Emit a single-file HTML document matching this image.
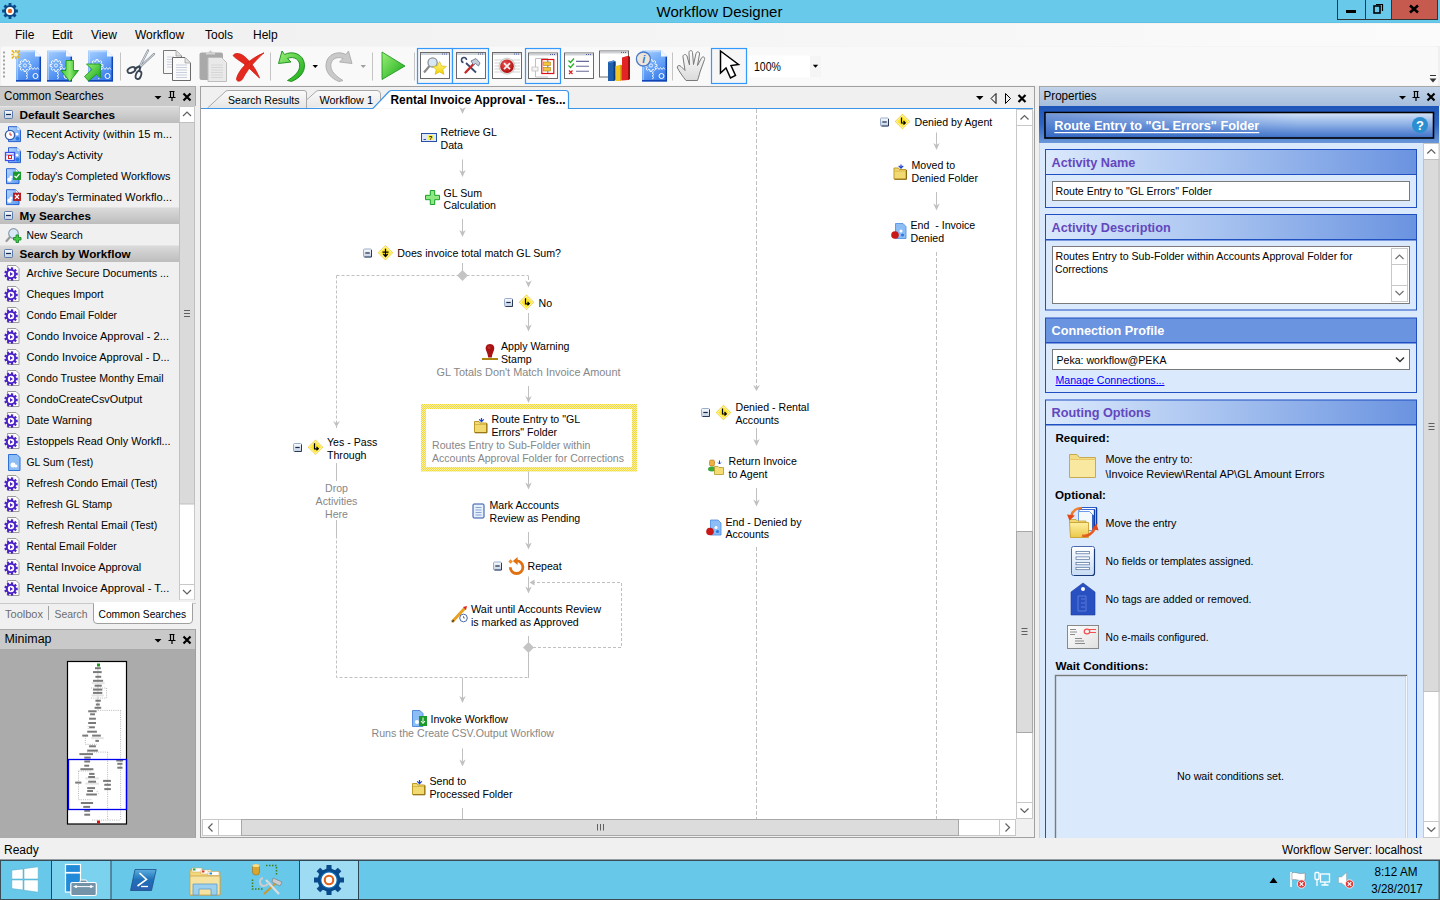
<!DOCTYPE html>
<html><head><meta charset="utf-8"><title>Workflow Designer</title>
<style>html,body{margin:0;padding:0;width:1440px;height:900px;overflow:hidden;background:#F0F0F0}
svg{display:block;font-family:"Liberation Sans", sans-serif}</style></head>
<body><svg width="1440" height="900" viewBox="0 0 1440 900">
<rect x="0" y="0" width="1440" height="900" fill="#F0F0F0"/>
<rect x="0" y="0" width="1440" height="23" fill="#69C9EA"/>
<rect x="0" y="22" width="1440" height="1" fill="#5EC4E7"/>
<rect x="0" y="23" width="1440" height="1" fill="#F6F3F1"/>
<path d="M17.88,9.59 L17.88,12.41 L15.83,12.42 L15.13,14.11 L16.56,15.57 L14.57,17.56 L13.11,16.13 L11.42,16.83 L11.41,18.88 L8.59,18.88 L8.58,16.83 L6.89,16.13 L5.43,17.56 L3.44,15.57 L4.87,14.11 L4.17,12.42 L2.12,12.41 L2.12,9.59 L4.17,9.58 L4.87,7.89 L3.44,6.43 L5.43,4.44 L6.89,5.87 L8.58,5.17 L8.59,3.12 L11.41,3.12 L11.42,5.17 L13.11,5.87 L14.57,4.44 L16.56,6.43 L15.13,7.89 L15.83,9.58Z" fill="#0A4A8A"/>
<circle cx="10" cy="11" r="4" fill="#fff"/><circle cx="10" cy="11" r="2.2" fill="#E2651E"/>
<text x="719.5" y="17" font-size="15" fill="#000" font-weight="normal" text-anchor="middle" textLength="126" lengthAdjust="spacingAndGlyphs">Workflow Designer</text>
<rect x="1337.5" y="-1" width="28" height="20.5" fill="#69C9EA" stroke="#333" stroke-width="1"/>
<rect x="1365.5" y="-1" width="26" height="20.5" fill="#69C9EA" stroke="#333" stroke-width="1"/>
<rect x="1391.5" y="-1" width="46" height="20.5" fill="#C75A4F" stroke="#333" stroke-width="1"/>
<rect x="1346" y="10" width="10" height="3" fill="#000"/>
<rect x="1374" y="6" width="6" height="7" fill="none" stroke="#000" stroke-width="1.6"/>
<path d="M1376,4.5 H1382.5 V11" fill="none" stroke="#000" stroke-width="1.2"/>
<path d="M1410,5.5 L1418,12.5 M1418,5.5 L1410,12.5" stroke="#000" stroke-width="2.6"/>
<defs><linearGradient id="mnug" x1="0" y1="0" x2="1" y2="0"><stop offset="0" stop-color="#EFEFEF"/><stop offset="1" stop-color="#FBFBFB"/></linearGradient></defs><rect x="0" y="24" width="1440" height="22" fill="url(#mnug)"/>
<text x="15" y="39" font-size="12" fill="#000" font-weight="normal" text-anchor="start">File</text>
<text x="52" y="39" font-size="12" fill="#000" font-weight="normal" text-anchor="start">Edit</text>
<text x="91" y="39" font-size="12" fill="#000" font-weight="normal" text-anchor="start">View</text>
<text x="135" y="39" font-size="12" fill="#000" font-weight="normal" text-anchor="start">Workflow</text>
<text x="205" y="39" font-size="12" fill="#000" font-weight="normal" text-anchor="start">Tools</text>
<text x="253" y="39" font-size="12" fill="#000" font-weight="normal" text-anchor="start">Help</text>
<defs><linearGradient id="bdg" x1="0" y1="0" x2="0.5" y2="1"><stop offset="0" stop-color="#A9D0FF"/><stop offset="0.55" stop-color="#6BA6F8"/><stop offset="1" stop-color="#3D7FEA"/></linearGradient><linearGradient id="grn" x1="0" y1="0" x2="1" y2="1"><stop offset="0" stop-color="#9CF07A"/><stop offset="1" stop-color="#14A814"/></linearGradient><linearGradient id="grnv" x1="0" y1="0" x2="1" y2="0"><stop offset="0" stop-color="#3CC83C"/><stop offset="0.5" stop-color="#8EEA70"/><stop offset="1" stop-color="#18A818"/></linearGradient><radialGradient id="redc" cx="0.4" cy="0.35" r="0.7"><stop offset="0" stop-color="#F05050"/><stop offset="1" stop-color="#A80A0A"/></radialGradient><linearGradient id="starg" x1="0" y1="0" x2="0" y2="1"><stop offset="0" stop-color="#FFF890"/><stop offset="1" stop-color="#F0D000"/></linearGradient><linearGradient id="handg" x1="0" y1="0" x2="0" y2="1"><stop offset="0" stop-color="#fff"/><stop offset="1" stop-color="#DADADA"/></linearGradient></defs>
<rect x="0" y="46" width="1440" height="40" fill="#F0F0F0"/>
<rect x="1" y="46.5" width="1437" height="39" rx="2" fill="#F9F9F9"/>
<rect x="3" y="51.5" width="2" height="2" fill="#A5A5A5"/>
<rect x="3" y="55.5" width="2" height="2" fill="#A5A5A5"/>
<rect x="3" y="59.5" width="2" height="2" fill="#A5A5A5"/>
<rect x="3" y="63.5" width="2" height="2" fill="#A5A5A5"/>
<rect x="3" y="67.5" width="2" height="2" fill="#A5A5A5"/>
<rect x="3" y="71.5" width="2" height="2" fill="#A5A5A5"/>
<rect x="3" y="75.5" width="2" height="2" fill="#A5A5A5"/>
<path d="M16,50.5 H35 L41,56.5 V81.5 H16Z" fill="url(#bdg)"/><path d="M17.2,51.7 H34.5 M17.2,51.7 V80.0" stroke="#C9E2FF" stroke-width="1" opacity="0.8"/><path d="M40.3,56.5 V80.8 H16" fill="none" stroke="#1244B4" stroke-width="1.5"/><path d="M35,50.5 V56.5 H41Z" fill="#F2F7FF"/><path d="M30.91,64.45 L30.91,66.55 L29.37,66.57 L28.85,67.84 L29.92,68.93 L28.43,70.42 L27.34,69.35 L26.07,69.87 L26.05,71.41 L23.95,71.41 L23.93,69.87 L22.66,69.35 L21.57,70.42 L20.08,68.93 L21.15,67.84 L20.63,66.57 L19.09,66.55 L19.09,64.45 L20.63,64.43 L21.15,63.16 L20.08,62.07 L21.57,60.58 L22.66,61.65 L23.93,61.13 L23.95,59.59 L26.05,59.59 L26.07,61.13 L27.34,61.65 L28.43,60.58 L29.92,62.07 L28.85,63.16 L29.37,64.43Z" fill="none" stroke="#fff" stroke-width="0.9"/><circle cx="25" cy="65.5" r="1.6" fill="none" stroke="#fff" stroke-width="0.8"/><path d="M30,69.5 l1.5,-2 l1.5,2 l1.5,-2 l1.5,2 l1.5,-2 l1.5,2" fill="none" stroke="#fff" stroke-width="0.8"/><path d="M28,71.5 l-2,1.5 l2,1.5 l-2,1.5 l2,1.5 l-2,1.5" fill="none" stroke="#fff" stroke-width="0.8"/><circle cx="35.5" cy="76.0" r="2.5" fill="none" stroke="#fff" stroke-width="1"/>
<g transform="translate(15.8 54.4)"><path d="M-4,-4 L4,4 M4,-4 L-4,4" stroke="#E6B422" stroke-width="1.5"/><path d="M0,-4.5 V4.5 M-4.5,0 H4.5" stroke="#E6B422" stroke-width="1.5"/><circle r="2.2" fill="#FFF6C8"/></g>
<path d="M47,50.5 H66 L72,56.5 V81.5 H47Z" fill="url(#bdg)"/><path d="M48.2,51.7 H65.5 M48.2,51.7 V80.0" stroke="#C9E2FF" stroke-width="1" opacity="0.8"/><path d="M71.3,56.5 V80.8 H47" fill="none" stroke="#1244B4" stroke-width="1.5"/><path d="M66,50.5 V56.5 H72Z" fill="#F2F7FF"/><path d="M61.91,64.45 L61.91,66.55 L60.37,66.57 L59.85,67.84 L60.92,68.93 L59.43,70.42 L58.34,69.35 L57.07,69.87 L57.05,71.41 L54.95,71.41 L54.93,69.87 L53.66,69.35 L52.57,70.42 L51.08,68.93 L52.15,67.84 L51.63,66.57 L50.09,66.55 L50.09,64.45 L51.63,64.43 L52.15,63.16 L51.08,62.07 L52.57,60.58 L53.66,61.65 L54.93,61.13 L54.95,59.59 L57.05,59.59 L57.07,61.13 L58.34,61.65 L59.43,60.58 L60.92,62.07 L59.85,63.16 L60.37,64.43Z" fill="none" stroke="#fff" stroke-width="0.9"/><circle cx="56" cy="65.5" r="1.6" fill="none" stroke="#fff" stroke-width="0.8"/><path d="M61,69.5 l1.5,-2 l1.5,2 l1.5,-2 l1.5,2 l1.5,-2 l1.5,2" fill="none" stroke="#fff" stroke-width="0.8"/><path d="M59,71.5 l-2,1.5 l2,1.5 l-2,1.5 l2,1.5 l-2,1.5" fill="none" stroke="#fff" stroke-width="0.8"/><circle cx="66.5" cy="76.0" r="2.5" fill="none" stroke="#fff" stroke-width="1"/>
<path d="M66,60.5 H73.5 V70.5 H78.5 L69.8,81.5 L61,70.5 H66Z" fill="url(#grnv)" stroke="#129012" stroke-width="0.8"/>
<path d="M88,50.5 H107 L113,56.5 V81.5 H88Z" fill="url(#bdg)"/><path d="M89.2,51.7 H106.5 M89.2,51.7 V80.0" stroke="#C9E2FF" stroke-width="1" opacity="0.8"/><path d="M112.3,56.5 V80.8 H88" fill="none" stroke="#1244B4" stroke-width="1.5"/><path d="M107,50.5 V56.5 H113Z" fill="#F2F7FF"/><path d="M102.91,64.45 L102.91,66.55 L101.37,66.57 L100.85,67.84 L101.92,68.93 L100.43,70.42 L99.34,69.35 L98.07,69.87 L98.05,71.41 L95.95,71.41 L95.93,69.87 L94.66,69.35 L93.57,70.42 L92.08,68.93 L93.15,67.84 L92.63,66.57 L91.09,66.55 L91.09,64.45 L92.63,64.43 L93.15,63.16 L92.08,62.07 L93.57,60.58 L94.66,61.65 L95.93,61.13 L95.95,59.59 L98.05,59.59 L98.07,61.13 L99.34,61.65 L100.43,60.58 L101.92,62.07 L100.85,63.16 L101.37,64.43Z" fill="none" stroke="#fff" stroke-width="0.9"/><circle cx="97" cy="65.5" r="1.6" fill="none" stroke="#fff" stroke-width="0.8"/><path d="M102,69.5 l1.5,-2 l1.5,2 l1.5,-2 l1.5,2 l1.5,-2 l1.5,2" fill="none" stroke="#fff" stroke-width="0.8"/><path d="M100,71.5 l-2,1.5 l2,1.5 l-2,1.5 l2,1.5 l-2,1.5" fill="none" stroke="#fff" stroke-width="0.8"/><circle cx="107.5" cy="76.0" r="2.5" fill="none" stroke="#fff" stroke-width="1"/>
<path d="M100.3,64 L100.3,78 L96.5,74.3 L88.5,81 L84.5,76.5 L92,69.5 L86.5,64Z" fill="url(#grn)" stroke="#129012" stroke-width="0.8"/>
<rect x="120" y="52.5" width="1" height="28" fill="#C4C4C4"/>
<path d="M140,66 L148,50.5 M140.5,66.5 L154,54" stroke="#8A949E" stroke-width="2.2" stroke-linecap="round"/>
<path d="M140,66 L148,50.5 M140.5,66.5 L154,54" stroke="#E8ECF0" stroke-width="0.8"/>
<path d="M140,66 L134,69 M140.5,66.5 L139,72" stroke="#3A4654" stroke-width="2"/>
<ellipse cx="131.5" cy="70" rx="4.2" ry="2.6" fill="none" stroke="#3A4654" stroke-width="1.8" transform="rotate(-25 131.5 70)"/>
<ellipse cx="138.5" cy="75" rx="2.6" ry="4.2" fill="none" stroke="#3A4654" stroke-width="1.8" transform="rotate(20 138.5 75)"/>
<path d="M163.5,50.5 H176 L181.5,56 V73.5 H163.5Z" fill="#F8F8F8" stroke="#7A7A7A" stroke-width="1"/>
<path d="M176,50.5 V56 H181.5" fill="#E0E0E0" stroke="#9A9A9A" stroke-width="0.7"/>
<path d="M167,57.0 H174" stroke="#C8CEDC" stroke-width="0.9"/>
<path d="M167,59.5 H174" stroke="#C8CEDC" stroke-width="0.9"/>
<path d="M167,62.0 H174" stroke="#C8CEDC" stroke-width="0.9"/>
<path d="M167,64.5 H174" stroke="#C8CEDC" stroke-width="0.9"/>
<path d="M167,67.0 H174" stroke="#C8CEDC" stroke-width="0.9"/>
<path d="M172.5,57.5 H185 L190.5,63 V80.5 H172.5Z" fill="#FAFAFA" stroke="#6A6A6A" stroke-width="1"/>
<path d="M185,57.5 V63 H190.5" fill="#E0E0E0" stroke="#9A9A9A" stroke-width="0.7"/>
<path d="M176,65.0 H187" stroke="#C4CADA" stroke-width="0.9"/>
<path d="M176,67.5 H187" stroke="#C4CADA" stroke-width="0.9"/>
<path d="M176,70.0 H187" stroke="#C4CADA" stroke-width="0.9"/>
<path d="M176,72.5 H187" stroke="#C4CADA" stroke-width="0.9"/>
<path d="M176,75.0 H187" stroke="#C4CADA" stroke-width="0.9"/>
<path d="M176,77.5 H187" stroke="#C4CADA" stroke-width="0.9"/>
<rect x="199.5" y="52.5" width="23.5" height="27.5" rx="2" fill="#A9A9A9"/>
<path d="M206,54 L210.5,50.5 L215,54Z" fill="#C8C8C8" stroke="#E0E0E0" stroke-width="0.8"/>
<path d="M208,57.5 H221.5 L226.5,62.5 V81.5 H208Z" fill="#E9E9E9" stroke="#BDBDBD" stroke-width="1"/>
<path d="M211,65.0 H223" stroke="#D4D4D4" stroke-width="0.9"/>
<path d="M211,67.5 H223" stroke="#D4D4D4" stroke-width="0.9"/>
<path d="M211,70.0 H223" stroke="#D4D4D4" stroke-width="0.9"/>
<path d="M211,72.5 H223" stroke="#D4D4D4" stroke-width="0.9"/>
<path d="M211,75.0 H223" stroke="#D4D4D4" stroke-width="0.9"/>
<path d="M211,77.5 H223" stroke="#D4D4D4" stroke-width="0.9"/>
<path d="M233,55.5 C235.5,52 241,53.5 244.5,56.5 C250.5,61.5 256,69 259.5,78 C255,74 249.5,68 243.5,63.5 C239.5,60.5 235.5,58.5 233,55.5Z" fill="#E42A1E" stroke="#D01A10" stroke-width="0.8"/>
<path d="M264,52.8 C255,56.5 247,62 241.5,69 C238.5,73 236.5,77 236.5,79.5 C237,82 241,81.5 242.5,79 C245.5,73 251,65.5 256.5,60 C259.5,57 262,54.5 264,52.8Z" fill="#E42A1E" stroke="#D01A10" stroke-width="0.8"/>
<rect x="270" y="52.5" width="1" height="28" fill="#C4C4C4"/>
<path d="M282,51 L278.5,63.5 L291,62 L287.5,58.5 C294,55.5 301,60 299.5,67.5 C298.5,73 293,77 287.5,80.5 L291.5,81.5 C299,78.5 305,73 304.5,64.5 C303.5,53.5 292,50.5 284.5,54.5Z" fill="url(#grn)" stroke="#178A17" stroke-width="0.9"/>
<path d="M312.5,65 H318 L315.25,68Z" fill="#000"/>
<path d="M348.5,51 L352,63.5 L339.5,62 L343,58.5 C336.5,55.5 329.5,60 331,67.5 C332,73 337.5,77 343,80.5 L339,81.5 C331.5,78.5 325.5,73 326,64.5 C327,53.5 338.5,50.5 346,54.5Z" fill="#C9C9C9" stroke="#ABABAB" stroke-width="0.9"/>
<path d="M360.5,65 H366 L363.25,68Z" fill="#A0A0A0"/>
<rect x="372" y="52.5" width="1" height="28" fill="#C4C4C4"/>
<path d="M382,52 L405,66 L382,79.5Z" fill="url(#grn)" stroke="#1A8F1A" stroke-width="0.8"/>
<rect x="414" y="52.5" width="1" height="28" fill="#C4C4C4"/>
<rect x="417.5" y="48.5" width="35" height="35" fill="#F6F6F6" stroke="#3399FF" stroke-width="1.2"/>
<rect x="420.5" y="52.5" width="29" height="26" fill="#fff" stroke="#6A6A6A" stroke-width="1"/><rect x="421" y="53" width="28" height="2" fill="#D0D4D8"/><path d="M442,54 h1 m1,0 h1 m1,0 h1" stroke="#4A5A9A" stroke-width="1.2"/>
<path d="M429.5,66 L424,72.5" stroke="#8A8A8A" stroke-width="2.2"/><circle cx="432.6" cy="62.4" r="4.6" fill="#D6E8F8" stroke="#909090" stroke-width="1.3"/>
<path d="M439.5,61.5 L441.6,66 L446.4,66.4 L442.8,69.6 L443.9,74.4 L439.5,71.9 L435.1,74.4 L436.2,69.6 L432.6,66.4 L437.4,66Z" fill="url(#starg)" stroke="#D0B000" stroke-width="0.6"/>
<rect x="452.5" y="48.5" width="36" height="35" fill="#F6F6F6" stroke="#3399FF" stroke-width="1.2"/>
<rect x="456.5" y="52.5" width="29" height="26" fill="#fff" stroke="#6A6A6A" stroke-width="1"/><rect x="457" y="53" width="28" height="2" fill="#D0D4D8"/><path d="M478,54 h1 m1,0 h1 m1,0 h1" stroke="#4A5A9A" stroke-width="1.2"/>
<path d="M466,63 L476,72.5" stroke="#3A4A70" stroke-width="1.8"/><path d="M463.5,62.5 a2.5,2.5 0 1,1 3,-2.5" fill="none" stroke="#3A4A70" stroke-width="1.5"/>
<path d="M465.5,72.5 L474,63.5" stroke="#C82828" stroke-width="2.4" stroke-linecap="round"/><path d="M471,61 L476,58.5 L480,63 L478.5,66 L475.5,63.5 L473.5,65Z" fill="#C8CCD8" stroke="#4A5A80" stroke-width="0.7"/>
<rect x="492.5" y="52.5" width="29" height="26" fill="#fff" stroke="#6A6A6A" stroke-width="1"/><rect x="493" y="53" width="28" height="2" fill="#D0D4D8"/><path d="M514,54 h1 m1,0 h1 m1,0 h1" stroke="#4A5A9A" stroke-width="1.2"/>
<path d="M494.5,60 H520 M494.5,63 H520 M494.5,66 H520 M494.5,69 H520 M494.5,72 H520" stroke="#C8C8C8" stroke-width="0.8"/>
<circle cx="507" cy="66.2" r="8" fill="#E8E8E8" stroke="#B0B0B0" stroke-width="0.6"/><circle cx="507" cy="66.2" r="6.8" fill="url(#redc)"/><path d="M504,63.2 L510,69.2 M510,63.2 L504,69.2" stroke="#F2F2F2" stroke-width="1.8"/>
<rect x="525.5" y="48.5" width="35" height="35" fill="#F6F6F6" stroke="#3399FF" stroke-width="1.2"/>
<rect x="528.5" y="53.0" width="29" height="25.5" fill="#fff" stroke="#6A6A6A" stroke-width="1"/><rect x="529" y="53.5" width="28" height="2" fill="#D0D4D8"/><path d="M550,54.5 h1 m1,0 h1 m1,0 h1" stroke="#4A5A9A" stroke-width="1.2"/>
<path d="M535.5,58.5 H548 M535.5,58.5 V77 H548 M531.5,69 H535.5" fill="none" stroke="#C0C0C0" stroke-width="1"/><rect x="532" y="67" width="6" height="4" fill="#F4F4F4" stroke="#C0C0C0" stroke-width="0.8"/>
<rect x="541.8" y="59.5" width="12" height="14" fill="#fff" stroke="#E01010" stroke-width="1.2"/><path d="M547.8,59.5 V73.5" stroke="#2A50C8" stroke-width="0.8"/>
<rect x="543.5" y="62" width="7" height="3.5" fill="#F4C440" stroke="#B08010" stroke-width="0.6"/><rect x="543.5" y="67.5" width="7" height="3.5" fill="#F4C440" stroke="#B08010" stroke-width="0.6"/>
<rect x="564.5" y="53.0" width="29" height="25.5" fill="#fff" stroke="#6A6A6A" stroke-width="1"/><rect x="565" y="53.5" width="28" height="2" fill="#D0D4D8"/><path d="M586,54.5 h1 m1,0 h1 m1,0 h1" stroke="#4A5A9A" stroke-width="1.2"/>
<path d="M568.5,60.5 L570.5,62.5 L574,58.5 M568.5,65.5 L570.5,67.5 L574,63.5" fill="none" stroke="#22B022" stroke-width="1.2"/><path d="M569,70.5 L572.5,74 M572.5,70.5 L569,74" stroke="#E02020" stroke-width="1.2"/>
<path d="M576,61.4 H589 M576,66.3 H589 M576,71.3 H589" stroke="#6A6A9A" stroke-width="1.1"/>
<rect x="599.5" y="51.0" width="29" height="26" fill="#fff" stroke="#6A6A6A" stroke-width="1"/><rect x="600" y="51.5" width="28" height="2" fill="#D0D4D8"/><path d="M621,52.5 h1 m1,0 h1 m1,0 h1" stroke="#4A5A9A" stroke-width="1.2"/>
<path d="M608,62 L613.5,60.5 L615.5,61.5 V80 L613.5,81 L608,81Z" fill="#1F5FAE"/><path d="M613.5,60.5 L615.5,61.5 V80 L613.5,81Z" fill="#0E3C78"/><path d="M608,62 L613.5,60.5 L615.5,61.5 L610,63Z" fill="#4A8AD8"/>
<path d="M615.5,66 L620.5,64.8 L622,65.6 V80 L620.5,81 L615.5,81Z" fill="#F2C424"/><path d="M620.5,64.8 L622,65.6 V80 L620.5,81Z" fill="#B88A00"/>
<path d="M622,57.5 L628,55.8 L630,57 V79 L628,80 L622,80.5Z" fill="#E22424"/><path d="M628,55.8 L630,57 V79 L628,80Z" fill="#9A0E0E"/>
<path d="M642,50.5 H661 L667,56.5 V81.5 H642Z" fill="url(#bdg)"/><path d="M643.2,51.7 H660.5 M643.2,51.7 V80.0" stroke="#C9E2FF" stroke-width="1" opacity="0.8"/><path d="M666.3,56.5 V80.8 H642" fill="none" stroke="#1244B4" stroke-width="1.5"/><path d="M661,50.5 V56.5 H667Z" fill="#F2F7FF"/><path d="M656.91,64.45 L656.91,66.55 L655.37,66.57 L654.85,67.84 L655.92,68.93 L654.43,70.42 L653.34,69.35 L652.07,69.87 L652.05,71.41 L649.95,71.41 L649.93,69.87 L648.66,69.35 L647.57,70.42 L646.08,68.93 L647.15,67.84 L646.63,66.57 L645.09,66.55 L645.09,64.45 L646.63,64.43 L647.15,63.16 L646.08,62.07 L647.57,60.58 L648.66,61.65 L649.93,61.13 L649.95,59.59 L652.05,59.59 L652.07,61.13 L653.34,61.65 L654.43,60.58 L655.92,62.07 L654.85,63.16 L655.37,64.43Z" fill="none" stroke="#fff" stroke-width="0.9"/><circle cx="651" cy="65.5" r="1.6" fill="none" stroke="#fff" stroke-width="0.8"/><path d="M656,69.5 l1.5,-2 l1.5,2 l1.5,-2 l1.5,2 l1.5,-2 l1.5,2" fill="none" stroke="#fff" stroke-width="0.8"/><path d="M654,71.5 l-2,1.5 l2,1.5 l-2,1.5 l2,1.5 l-2,1.5" fill="none" stroke="#fff" stroke-width="0.8"/><circle cx="661.5" cy="76.0" r="2.5" fill="none" stroke="#fff" stroke-width="1"/>
<circle cx="643.4" cy="59" r="7" fill="#EDE6D8" stroke="#4A7AC8" stroke-width="1.3"/><text x="643.8" y="63" font-size="11" font-style="italic" font-weight="bold" fill="#3A7AD8" text-anchor="middle">i</text>
<rect x="672" y="52.5" width="1" height="28" fill="#C4C4C4"/>
<path d="M686,80.5 C683,77 679,71 677.5,68 C676.5,66 679,64.5 681,66.5 L685,70.5 L683,57 C682.5,54.5 686,53.5 687,56 L689.5,65 L689,52.5 C689,50 692.5,50 692.5,52.5 L693.5,64.5 L696,53.5 C696.5,51 700,51.5 699.5,54 L697.5,65.5 L701.5,58 C702.5,56 705.5,57 704.5,59.5 L700,72 C699,76 698,79 697.5,80.5Z" fill="url(#handg)" stroke="#7A7A7A" stroke-width="1"/>
<rect x="711.5" y="48.5" width="35" height="35" fill="#F6F6F6" stroke="#3399FF" stroke-width="1.2"/>
<path d="M720.5,51 L738.5,64.5 L731,65.5 L735.5,75.5 L730.5,78 L726,68 L720.5,73Z" fill="#fff" stroke="#000" stroke-width="1.5" stroke-linejoin="miter"/>
<rect x="748.5" y="55.5" width="73" height="22" fill="#FFFFFF"/>
<rect x="810" y="55.5" width="11.5" height="22" fill="#F5F5F5"/>
<text x="754" y="70.5" font-size="12" fill="#000" font-weight="normal" text-anchor="start" textLength="27" lengthAdjust="spacingAndGlyphs">100%</text>
<path d="M812.8,64.8 H818.2 L815.5,67.8Z" fill="#000"/>
<path d="M1430,75.5 H1436" stroke="#333" stroke-width="1"/><path d="M1429.5,78.5 H1436.5 L1433,82.5Z" fill="#333"/>
<defs><linearGradient id="ghg" x1="0" y1="0" x2="0" y2="1"><stop offset="0" stop-color="#DCDCDC"/><stop offset="1" stop-color="#BDBDBD"/></linearGradient><linearGradient id="sdg" x1="0" y1="0" x2="1" y2="1"><stop offset="0" stop-color="#B8D8FF"/><stop offset="1" stop-color="#5A9AF0"/></linearGradient><linearGradient id="mbg" x1="0" y1="0" x2="0" y2="1"><stop offset="0" stop-color="#FAFCFF"/><stop offset="1" stop-color="#C4D0E2"/></linearGradient></defs>
<rect x="0" y="86" width="196" height="20" fill="#C9C9C9"/>
<rect x="0" y="86" width="196" height="1" fill="#A9A9A9"/>
<rect x="195" y="86" width="1" height="20" fill="#A9A9A9"/>
<text x="4" y="100" font-size="12" fill="#000" font-weight="normal" text-anchor="start" textLength="99.5" lengthAdjust="spacingAndGlyphs">Common Searches</text>
<path d="M154.5,96 H161.5 L158,99.5Z" fill="#000"/><path d="M169.5,91.5 H174.5 M170.5,91.5 V97.5 M173.5,91.5 V97.5 M168.5,97.5 H175.5 M172,97.5 V101" stroke="#000" stroke-width="1.2" fill="none"/><path d="M183.5,93.5 L190.5,100.5 M190.5,93.5 L183.5,100.5" stroke="#000" stroke-width="2.2"/>
<rect x="0" y="106" width="195" height="494" fill="#F0F0F0"/>
<rect x="0" y="106" width="179" height="17" fill="url(#ghg)"/>
<rect x="0" y="106" width="179" height="1" fill="#E4E4E4"/>
<rect x="4.5" y="110.5" width="8" height="8" rx="0.8" fill="url(#mbg)" stroke="#5A7AAA" stroke-width="1"/><path d="M6,114.5 H11" stroke="#1A2A50" stroke-width="1.2"/>
<text x="19.4" y="119" font-size="11.8" fill="#000" font-weight="bold" text-anchor="start" textLength="95.6" lengthAdjust="spacingAndGlyphs">Default Searches</text>
<path d="M8.5,126.7 H17.0 L20.5,130.2 V141.6 H8.5Z" fill="url(#sdg)" stroke="#2A62D0" stroke-width="1"/><path d="M17.0,126.7 V130.2 H20.5" fill="#fff" stroke="#6A9AE0" stroke-width="0.6"/><circle cx="17.5" cy="138.6" r="2" fill="#2D7BE0"/><circle cx="17.0" cy="134.2" r="1.4" fill="#fff"/><circle cx="10" cy="135" r="4.6" fill="#fff" stroke="#2F5AB0" stroke-width="1.3"/><path d="M10,132.5 V135 H12" stroke="#E02020" stroke-width="1" fill="none"/>
<text x="26.5" y="138" font-size="11" fill="#000" font-weight="normal" text-anchor="start" textLength="145.5" lengthAdjust="spacingAndGlyphs">Recent Activity (within 15 m...</text>
<path d="M8.5,147.7 H17.0 L20.5,151.2 V162.6 H8.5Z" fill="url(#sdg)" stroke="#2A62D0" stroke-width="1"/><path d="M17.0,147.7 V151.2 H20.5" fill="#fff" stroke="#6A9AE0" stroke-width="0.6"/><circle cx="17.5" cy="159.6" r="2" fill="#2D7BE0"/><circle cx="17.0" cy="155.2" r="1.4" fill="#fff"/><rect x="5.5" y="152.5" width="9" height="8" fill="#fff" stroke="#3A50E8" stroke-width="1.3"/><path d="M6,155 H14" stroke="#3A50E8" stroke-width="0.8"/><rect x="8.5" y="155.5" width="3" height="3" fill="none" stroke="#E02020" stroke-width="1"/>
<text x="26.5" y="159" font-size="11" fill="#000" font-weight="normal" text-anchor="start" textLength="76.1" lengthAdjust="spacingAndGlyphs">Today&#39;s Activity</text>
<path d="M6.5,168.7 H15.5 L19,172.2 V183.6 H6.5Z" fill="url(#sdg)" stroke="#2A62D0" stroke-width="1"/><path d="M15.5,168.7 V172.2 H19" fill="#fff" stroke="#6A9AE0" stroke-width="0.6"/><circle cx="9.5" cy="179.6" r="2.2" fill="#fff"/><circle cx="11" cy="177.1" r="1.5" fill="#fff"/><rect x="13" y="171.7" width="8" height="8.2" fill="#1A9A2A"/><path d="M14.5,175.8 L16.3,177.6 L19.5,173.8" stroke="#fff" stroke-width="1.2" fill="none"/>
<text x="26.5" y="180" font-size="11" fill="#000" font-weight="normal" text-anchor="start" textLength="144.0" lengthAdjust="spacingAndGlyphs">Today&#39;s Completed Workflows</text>
<path d="M6.5,189.7 H15.5 L19,193.2 V204.6 H6.5Z" fill="url(#sdg)" stroke="#2A62D0" stroke-width="1"/><path d="M15.5,189.7 V193.2 H19" fill="#fff" stroke="#6A9AE0" stroke-width="0.6"/><circle cx="9.5" cy="200.6" r="2.2" fill="#fff"/><circle cx="11" cy="198.1" r="1.5" fill="#fff"/><rect x="13" y="192.7" width="8" height="8.2" fill="#B81C1C"/><path d="M15,194.7 L19,198.9 M19,194.7 L15,198.9" stroke="#fff" stroke-width="1.3"/>
<text x="26.5" y="201" font-size="11" fill="#000" font-weight="normal" text-anchor="start" textLength="145.5" lengthAdjust="spacingAndGlyphs">Today&#39;s Terminated Workflo...</text>
<rect x="0" y="207" width="179" height="17" fill="url(#ghg)"/>
<rect x="0" y="207" width="179" height="1" fill="#E4E4E4"/>
<rect x="4.5" y="211.5" width="8" height="8" rx="0.8" fill="url(#mbg)" stroke="#5A7AAA" stroke-width="1"/><path d="M6,215.5 H11" stroke="#1A2A50" stroke-width="1.2"/>
<text x="19.4" y="220" font-size="11.8" fill="#000" font-weight="bold" text-anchor="start" textLength="71.6" lengthAdjust="spacingAndGlyphs">My Searches</text>
<path d="M10,237 L6.5,241" stroke="#9A9A9A" stroke-width="2.2" stroke-linecap="round"/><circle cx="13.5" cy="233.5" r="4.8" fill="#D8EAF8" stroke="#8A9AAA" stroke-width="1.2"/><path d="M16,235 h2.5 v2.5 h2.5 v2.5 h-2.5 v2.5 h-2.5 v-2.5 h-2.5 v-2.5 h2.5Z" fill="#4ACC4A" stroke="#1A8A2A" stroke-width="0.9"/>
<text x="26.5" y="239" font-size="11" fill="#000" font-weight="normal" text-anchor="start" textLength="56.3" lengthAdjust="spacingAndGlyphs">New Search</text>
<rect x="0" y="245" width="179" height="17" fill="url(#ghg)"/>
<rect x="0" y="245" width="179" height="1" fill="#E4E4E4"/>
<rect x="4.5" y="249.5" width="8" height="8" rx="0.8" fill="url(#mbg)" stroke="#5A7AAA" stroke-width="1"/><path d="M6,253.5 H11" stroke="#1A2A50" stroke-width="1.2"/>
<text x="19.4" y="258" font-size="11.8" fill="#000" font-weight="bold" text-anchor="start" textLength="111.2" lengthAdjust="spacingAndGlyphs">Search by Workflow</text>
<path d="M7.5,265.5 H16 L19,268.5 V280.5 H7.5Z" fill="#fff" stroke="#9A9A9A" stroke-width="1"/><path d="M17.70,272.82 L17.70,275.18 L15.87,275.14 L15.46,276.25 L16.89,277.40 L15.37,279.21 L14.00,278.00 L12.97,278.60 L13.33,280.39 L11.00,280.80 L10.72,278.99 L9.55,278.79 L8.67,280.39 L6.63,279.21 L7.58,277.64 L6.82,276.74 L5.11,277.40 L4.30,275.18 L6.04,274.59 L6.04,273.41 L4.30,272.82 L5.11,270.60 L6.82,271.26 L7.58,270.36 L6.63,268.79 L8.67,267.61 L9.55,269.21 L10.72,269.01 L11.00,267.20 L13.33,267.61 L12.97,269.40 L14.00,270.00 L15.37,268.79 L16.89,270.60 L15.46,271.75 L15.87,272.86Z" fill="#4B22C8"/><circle cx="11" cy="274" r="5" fill="#4B22C8"/><circle cx="11" cy="274" r="3.2" fill="#fff"/><path d="M10,272 L13,274 L10,276Z" fill="#4B22C8"/>
<text x="26.5" y="277" font-size="11" fill="#000" font-weight="normal" text-anchor="start" textLength="142.5" lengthAdjust="spacingAndGlyphs">Archive Secure Documents ...</text>
<path d="M7.5,286.5 H16 L19,289.5 V301.5 H7.5Z" fill="#fff" stroke="#9A9A9A" stroke-width="1"/><path d="M17.70,293.82 L17.70,296.18 L15.87,296.14 L15.46,297.25 L16.89,298.40 L15.37,300.21 L14.00,299.00 L12.97,299.60 L13.33,301.39 L11.00,301.80 L10.72,299.99 L9.55,299.79 L8.67,301.39 L6.63,300.21 L7.58,298.64 L6.82,297.74 L5.11,298.40 L4.30,296.18 L6.04,295.59 L6.04,294.41 L4.30,293.82 L5.11,291.60 L6.82,292.26 L7.58,291.36 L6.63,289.79 L8.67,288.61 L9.55,290.21 L10.72,290.01 L11.00,288.20 L13.33,288.61 L12.97,290.40 L14.00,291.00 L15.37,289.79 L16.89,291.60 L15.46,292.75 L15.87,293.86Z" fill="#4B22C8"/><circle cx="11" cy="295" r="5" fill="#4B22C8"/><circle cx="11" cy="295" r="3.2" fill="#fff"/><path d="M10,293 L13,295 L10,297Z" fill="#4B22C8"/>
<text x="26.5" y="298" font-size="11" fill="#000" font-weight="normal" text-anchor="start" textLength="77.1" lengthAdjust="spacingAndGlyphs">Cheques Import</text>
<path d="M7.5,307.5 H16 L19,310.5 V322.5 H7.5Z" fill="#fff" stroke="#9A9A9A" stroke-width="1"/><path d="M17.70,314.82 L17.70,317.18 L15.87,317.14 L15.46,318.25 L16.89,319.40 L15.37,321.21 L14.00,320.00 L12.97,320.60 L13.33,322.39 L11.00,322.80 L10.72,320.99 L9.55,320.79 L8.67,322.39 L6.63,321.21 L7.58,319.64 L6.82,318.74 L5.11,319.40 L4.30,317.18 L6.04,316.59 L6.04,315.41 L4.30,314.82 L5.11,312.60 L6.82,313.26 L7.58,312.36 L6.63,310.79 L8.67,309.61 L9.55,311.21 L10.72,311.01 L11.00,309.20 L13.33,309.61 L12.97,311.40 L14.00,312.00 L15.37,310.79 L16.89,312.60 L15.46,313.75 L15.87,314.86Z" fill="#4B22C8"/><circle cx="11" cy="316" r="5" fill="#4B22C8"/><circle cx="11" cy="316" r="3.2" fill="#fff"/><path d="M10,314 L13,316 L10,318Z" fill="#4B22C8"/>
<text x="26.5" y="319" font-size="11" fill="#000" font-weight="normal" text-anchor="start" textLength="90.5" lengthAdjust="spacingAndGlyphs">Condo Email Folder</text>
<path d="M7.5,328.5 H16 L19,331.5 V343.5 H7.5Z" fill="#fff" stroke="#9A9A9A" stroke-width="1"/><path d="M17.70,335.82 L17.70,338.18 L15.87,338.14 L15.46,339.25 L16.89,340.40 L15.37,342.21 L14.00,341.00 L12.97,341.60 L13.33,343.39 L11.00,343.80 L10.72,341.99 L9.55,341.79 L8.67,343.39 L6.63,342.21 L7.58,340.64 L6.82,339.74 L5.11,340.40 L4.30,338.18 L6.04,337.59 L6.04,336.41 L4.30,335.82 L5.11,333.60 L6.82,334.26 L7.58,333.36 L6.63,331.79 L8.67,330.61 L9.55,332.21 L10.72,332.01 L11.00,330.20 L13.33,330.61 L12.97,332.40 L14.00,333.00 L15.37,331.79 L16.89,333.60 L15.46,334.75 L15.87,335.86Z" fill="#4B22C8"/><circle cx="11" cy="337" r="5" fill="#4B22C8"/><circle cx="11" cy="337" r="3.2" fill="#fff"/><path d="M10,335 L13,337 L10,339Z" fill="#4B22C8"/>
<text x="26.5" y="340" font-size="11" fill="#000" font-weight="normal" text-anchor="start" textLength="142.5" lengthAdjust="spacingAndGlyphs">Condo Invoice Approval - 2...</text>
<path d="M7.5,349.5 H16 L19,352.5 V364.5 H7.5Z" fill="#fff" stroke="#9A9A9A" stroke-width="1"/><path d="M17.70,356.82 L17.70,359.18 L15.87,359.14 L15.46,360.25 L16.89,361.40 L15.37,363.21 L14.00,362.00 L12.97,362.60 L13.33,364.39 L11.00,364.80 L10.72,362.99 L9.55,362.79 L8.67,364.39 L6.63,363.21 L7.58,361.64 L6.82,360.74 L5.11,361.40 L4.30,359.18 L6.04,358.59 L6.04,357.41 L4.30,356.82 L5.11,354.60 L6.82,355.26 L7.58,354.36 L6.63,352.79 L8.67,351.61 L9.55,353.21 L10.72,353.01 L11.00,351.20 L13.33,351.61 L12.97,353.40 L14.00,354.00 L15.37,352.79 L16.89,354.60 L15.46,355.75 L15.87,356.86Z" fill="#4B22C8"/><circle cx="11" cy="358" r="5" fill="#4B22C8"/><circle cx="11" cy="358" r="3.2" fill="#fff"/><path d="M10,356 L13,358 L10,360Z" fill="#4B22C8"/>
<text x="26.5" y="361" font-size="11" fill="#000" font-weight="normal" text-anchor="start" textLength="143.1" lengthAdjust="spacingAndGlyphs">Condo Invoice Approval - D...</text>
<path d="M7.5,370.5 H16 L19,373.5 V385.5 H7.5Z" fill="#fff" stroke="#9A9A9A" stroke-width="1"/><path d="M17.70,377.82 L17.70,380.18 L15.87,380.14 L15.46,381.25 L16.89,382.40 L15.37,384.21 L14.00,383.00 L12.97,383.60 L13.33,385.39 L11.00,385.80 L10.72,383.99 L9.55,383.79 L8.67,385.39 L6.63,384.21 L7.58,382.64 L6.82,381.74 L5.11,382.40 L4.30,380.18 L6.04,379.59 L6.04,378.41 L4.30,377.82 L5.11,375.60 L6.82,376.26 L7.58,375.36 L6.63,373.79 L8.67,372.61 L9.55,374.21 L10.72,374.01 L11.00,372.20 L13.33,372.61 L12.97,374.40 L14.00,375.00 L15.37,373.79 L16.89,375.60 L15.46,376.75 L15.87,377.86Z" fill="#4B22C8"/><circle cx="11" cy="379" r="5" fill="#4B22C8"/><circle cx="11" cy="379" r="3.2" fill="#fff"/><path d="M10,377 L13,379 L10,381Z" fill="#4B22C8"/>
<text x="26.5" y="382" font-size="11" fill="#000" font-weight="normal" text-anchor="start" textLength="137.1" lengthAdjust="spacingAndGlyphs">Condo Trustee Monthy Email</text>
<path d="M7.5,391.5 H16 L19,394.5 V406.5 H7.5Z" fill="#fff" stroke="#9A9A9A" stroke-width="1"/><path d="M17.70,398.82 L17.70,401.18 L15.87,401.14 L15.46,402.25 L16.89,403.40 L15.37,405.21 L14.00,404.00 L12.97,404.60 L13.33,406.39 L11.00,406.80 L10.72,404.99 L9.55,404.79 L8.67,406.39 L6.63,405.21 L7.58,403.64 L6.82,402.74 L5.11,403.40 L4.30,401.18 L6.04,400.59 L6.04,399.41 L4.30,398.82 L5.11,396.60 L6.82,397.26 L7.58,396.36 L6.63,394.79 L8.67,393.61 L9.55,395.21 L10.72,395.01 L11.00,393.20 L13.33,393.61 L12.97,395.40 L14.00,396.00 L15.37,394.79 L16.89,396.60 L15.46,397.75 L15.87,398.86Z" fill="#4B22C8"/><circle cx="11" cy="400" r="5" fill="#4B22C8"/><circle cx="11" cy="400" r="3.2" fill="#fff"/><path d="M10,398 L13,400 L10,402Z" fill="#4B22C8"/>
<text x="26.5" y="403" font-size="11" fill="#000" font-weight="normal" text-anchor="start" textLength="115.9" lengthAdjust="spacingAndGlyphs">CondoCreateCsvOutput</text>
<path d="M7.5,412.5 H16 L19,415.5 V427.5 H7.5Z" fill="#fff" stroke="#9A9A9A" stroke-width="1"/><path d="M17.70,419.82 L17.70,422.18 L15.87,422.14 L15.46,423.25 L16.89,424.40 L15.37,426.21 L14.00,425.00 L12.97,425.60 L13.33,427.39 L11.00,427.80 L10.72,425.99 L9.55,425.79 L8.67,427.39 L6.63,426.21 L7.58,424.64 L6.82,423.74 L5.11,424.40 L4.30,422.18 L6.04,421.59 L6.04,420.41 L4.30,419.82 L5.11,417.60 L6.82,418.26 L7.58,417.36 L6.63,415.79 L8.67,414.61 L9.55,416.21 L10.72,416.01 L11.00,414.20 L13.33,414.61 L12.97,416.40 L14.00,417.00 L15.37,415.79 L16.89,417.60 L15.46,418.75 L15.87,419.86Z" fill="#4B22C8"/><circle cx="11" cy="421" r="5" fill="#4B22C8"/><circle cx="11" cy="421" r="3.2" fill="#fff"/><path d="M10,419 L13,421 L10,423Z" fill="#4B22C8"/>
<text x="26.5" y="424" font-size="11" fill="#000" font-weight="normal" text-anchor="start" textLength="65.5" lengthAdjust="spacingAndGlyphs">Date Warning</text>
<path d="M7.5,433.5 H16 L19,436.5 V448.5 H7.5Z" fill="#fff" stroke="#9A9A9A" stroke-width="1"/><path d="M17.70,440.82 L17.70,443.18 L15.87,443.14 L15.46,444.25 L16.89,445.40 L15.37,447.21 L14.00,446.00 L12.97,446.60 L13.33,448.39 L11.00,448.80 L10.72,446.99 L9.55,446.79 L8.67,448.39 L6.63,447.21 L7.58,445.64 L6.82,444.74 L5.11,445.40 L4.30,443.18 L6.04,442.59 L6.04,441.41 L4.30,440.82 L5.11,438.60 L6.82,439.26 L7.58,438.36 L6.63,436.79 L8.67,435.61 L9.55,437.21 L10.72,437.01 L11.00,435.20 L13.33,435.61 L12.97,437.40 L14.00,438.00 L15.37,436.79 L16.89,438.60 L15.46,439.75 L15.87,440.86Z" fill="#4B22C8"/><circle cx="11" cy="442" r="5" fill="#4B22C8"/><circle cx="11" cy="442" r="3.2" fill="#fff"/><path d="M10,440 L13,442 L10,444Z" fill="#4B22C8"/>
<text x="26.5" y="445" font-size="11" fill="#000" font-weight="normal" text-anchor="start" textLength="144.1" lengthAdjust="spacingAndGlyphs">Estoppels Read Only Workfl...</text>
<path d="M8.5,454.5 H17 L20,457.5 V470.5 H8.5Z" fill="#8CBDF5" stroke="#2F6FD8" stroke-width="1"/><circle cx="13" cy="465" r="2.5" fill="#fff"/><circle cx="16" cy="466" r="1.5" fill="#fff"/>
<text x="26.5" y="466" font-size="11" fill="#000" font-weight="normal" text-anchor="start" textLength="66.6" lengthAdjust="spacingAndGlyphs">GL Sum (Test)</text>
<path d="M7.5,475.5 H16 L19,478.5 V490.5 H7.5Z" fill="#fff" stroke="#9A9A9A" stroke-width="1"/><path d="M17.70,482.82 L17.70,485.18 L15.87,485.14 L15.46,486.25 L16.89,487.40 L15.37,489.21 L14.00,488.00 L12.97,488.60 L13.33,490.39 L11.00,490.80 L10.72,488.99 L9.55,488.79 L8.67,490.39 L6.63,489.21 L7.58,487.64 L6.82,486.74 L5.11,487.40 L4.30,485.18 L6.04,484.59 L6.04,483.41 L4.30,482.82 L5.11,480.60 L6.82,481.26 L7.58,480.36 L6.63,478.79 L8.67,477.61 L9.55,479.21 L10.72,479.01 L11.00,477.20 L13.33,477.61 L12.97,479.40 L14.00,480.00 L15.37,478.79 L16.89,480.60 L15.46,481.75 L15.87,482.86Z" fill="#4B22C8"/><circle cx="11" cy="484" r="5" fill="#4B22C8"/><circle cx="11" cy="484" r="3.2" fill="#fff"/><path d="M10,482 L13,484 L10,486Z" fill="#4B22C8"/>
<text x="26.5" y="487" font-size="11" fill="#000" font-weight="normal" text-anchor="start" textLength="130.9" lengthAdjust="spacingAndGlyphs">Refresh Condo Email (Test)</text>
<path d="M7.5,496.5 H16 L19,499.5 V511.5 H7.5Z" fill="#fff" stroke="#9A9A9A" stroke-width="1"/><path d="M17.70,503.82 L17.70,506.18 L15.87,506.14 L15.46,507.25 L16.89,508.40 L15.37,510.21 L14.00,509.00 L12.97,509.60 L13.33,511.39 L11.00,511.80 L10.72,509.99 L9.55,509.79 L8.67,511.39 L6.63,510.21 L7.58,508.64 L6.82,507.74 L5.11,508.40 L4.30,506.18 L6.04,505.59 L6.04,504.41 L4.30,503.82 L5.11,501.60 L6.82,502.26 L7.58,501.36 L6.63,499.79 L8.67,498.61 L9.55,500.21 L10.72,500.01 L11.00,498.20 L13.33,498.61 L12.97,500.40 L14.00,501.00 L15.37,499.79 L16.89,501.60 L15.46,502.75 L15.87,503.86Z" fill="#4B22C8"/><circle cx="11" cy="505" r="5" fill="#4B22C8"/><circle cx="11" cy="505" r="3.2" fill="#fff"/><path d="M10,503 L13,505 L10,507Z" fill="#4B22C8"/>
<text x="26.5" y="508" font-size="11" fill="#000" font-weight="normal" text-anchor="start" textLength="85.5" lengthAdjust="spacingAndGlyphs">Refresh GL Stamp</text>
<path d="M7.5,517.5 H16 L19,520.5 V532.5 H7.5Z" fill="#fff" stroke="#9A9A9A" stroke-width="1"/><path d="M17.70,524.82 L17.70,527.18 L15.87,527.14 L15.46,528.25 L16.89,529.40 L15.37,531.21 L14.00,530.00 L12.97,530.60 L13.33,532.39 L11.00,532.80 L10.72,530.99 L9.55,530.79 L8.67,532.39 L6.63,531.21 L7.58,529.64 L6.82,528.74 L5.11,529.40 L4.30,527.18 L6.04,526.59 L6.04,525.41 L4.30,524.82 L5.11,522.60 L6.82,523.26 L7.58,522.36 L6.63,520.79 L8.67,519.61 L9.55,521.21 L10.72,521.01 L11.00,519.20 L13.33,519.61 L12.97,521.40 L14.00,522.00 L15.37,520.79 L16.89,522.60 L15.46,523.75 L15.87,524.86Z" fill="#4B22C8"/><circle cx="11" cy="526" r="5" fill="#4B22C8"/><circle cx="11" cy="526" r="3.2" fill="#fff"/><path d="M10,524 L13,526 L10,528Z" fill="#4B22C8"/>
<text x="26.5" y="529" font-size="11" fill="#000" font-weight="normal" text-anchor="start" textLength="130.9" lengthAdjust="spacingAndGlyphs">Refresh Rental Email (Test)</text>
<path d="M7.5,538.5 H16 L19,541.5 V553.5 H7.5Z" fill="#fff" stroke="#9A9A9A" stroke-width="1"/><path d="M17.70,545.82 L17.70,548.18 L15.87,548.14 L15.46,549.25 L16.89,550.40 L15.37,552.21 L14.00,551.00 L12.97,551.60 L13.33,553.39 L11.00,553.80 L10.72,551.99 L9.55,551.79 L8.67,553.39 L6.63,552.21 L7.58,550.64 L6.82,549.74 L5.11,550.40 L4.30,548.18 L6.04,547.59 L6.04,546.41 L4.30,545.82 L5.11,543.60 L6.82,544.26 L7.58,543.36 L6.63,541.79 L8.67,540.61 L9.55,542.21 L10.72,542.01 L11.00,540.20 L13.33,540.61 L12.97,542.40 L14.00,543.00 L15.37,541.79 L16.89,543.60 L15.46,544.75 L15.87,545.86Z" fill="#4B22C8"/><circle cx="11" cy="547" r="5" fill="#4B22C8"/><circle cx="11" cy="547" r="3.2" fill="#fff"/><path d="M10,545 L13,547 L10,549Z" fill="#4B22C8"/>
<text x="26.5" y="550" font-size="11" fill="#000" font-weight="normal" text-anchor="start" textLength="90.2" lengthAdjust="spacingAndGlyphs">Rental Email Folder</text>
<path d="M7.5,559.5 H16 L19,562.5 V574.5 H7.5Z" fill="#fff" stroke="#9A9A9A" stroke-width="1"/><path d="M17.70,566.82 L17.70,569.18 L15.87,569.14 L15.46,570.25 L16.89,571.40 L15.37,573.21 L14.00,572.00 L12.97,572.60 L13.33,574.39 L11.00,574.80 L10.72,572.99 L9.55,572.79 L8.67,574.39 L6.63,573.21 L7.58,571.64 L6.82,570.74 L5.11,571.40 L4.30,569.18 L6.04,568.59 L6.04,567.41 L4.30,566.82 L5.11,564.60 L6.82,565.26 L7.58,564.36 L6.63,562.79 L8.67,561.61 L9.55,563.21 L10.72,563.01 L11.00,561.20 L13.33,561.61 L12.97,563.40 L14.00,564.00 L15.37,562.79 L16.89,564.60 L15.46,565.75 L15.87,566.86Z" fill="#4B22C8"/><circle cx="11" cy="568" r="5" fill="#4B22C8"/><circle cx="11" cy="568" r="3.2" fill="#fff"/><path d="M10,566 L13,568 L10,570Z" fill="#4B22C8"/>
<text x="26.5" y="571" font-size="11" fill="#000" font-weight="normal" text-anchor="start" textLength="114.8" lengthAdjust="spacingAndGlyphs">Rental Invoice Approval</text>
<path d="M7.5,580.5 H16 L19,583.5 V595.5 H7.5Z" fill="#fff" stroke="#9A9A9A" stroke-width="1"/><path d="M17.70,587.82 L17.70,590.18 L15.87,590.14 L15.46,591.25 L16.89,592.40 L15.37,594.21 L14.00,593.00 L12.97,593.60 L13.33,595.39 L11.00,595.80 L10.72,593.99 L9.55,593.79 L8.67,595.39 L6.63,594.21 L7.58,592.64 L6.82,591.74 L5.11,592.40 L4.30,590.18 L6.04,589.59 L6.04,588.41 L4.30,587.82 L5.11,585.60 L6.82,586.26 L7.58,585.36 L6.63,583.79 L8.67,582.61 L9.55,584.21 L10.72,584.01 L11.00,582.20 L13.33,582.61 L12.97,584.40 L14.00,585.00 L15.37,583.79 L16.89,585.60 L15.46,586.75 L15.87,587.86Z" fill="#4B22C8"/><circle cx="11" cy="589" r="5" fill="#4B22C8"/><circle cx="11" cy="589" r="3.2" fill="#fff"/><path d="M10,587 L13,589 L10,591Z" fill="#4B22C8"/>
<text x="26.5" y="592" font-size="11" fill="#000" font-weight="normal" text-anchor="start" textLength="142.8" lengthAdjust="spacingAndGlyphs">Rental Invoice Approval - T...</text>
<rect x="179.5" y="106.5" width="15" height="493" fill="#fff" stroke="#C8C8C8" stroke-width="1"/>
<rect x="179.5" y="106.5" width="15" height="16" fill="#fff" stroke="#C8C8C8" stroke-width="1"/>
<path d="M183,116.0 L187,112.0 L191,116.0" fill="none" stroke="#606060" stroke-width="1.2"/>
<rect x="179.5" y="122.5" width="15" height="381.5" fill="#DADADA" stroke="#C0C0C0" stroke-width="1"/>
<path d="M184,310.5 H190 M184,313.5 H190 M184,316.5 H190" stroke="#606060" stroke-width="1"/>
<rect x="179.5" y="584.5" width="15" height="15.5" fill="#fff" stroke="#C8C8C8" stroke-width="1"/>
<path d="M183,590.0 L187,594.0 L191,590.0" fill="none" stroke="#606060" stroke-width="1.2"/>
<rect x="0" y="600" width="196" height="29" fill="#F0F0F0"/>
<path d="M93.5,603.5 H192.5 V620 Q192.5,623.5 189,623.5 H97 Q93.5,623.5 93.5,620Z" fill="#fff" stroke="#A0A0A0" stroke-width="1"/>
<rect x="94" y="602" width="98" height="2" fill="#fff"/>
<path d="M0,603.5 H93.5 M192.5,603.5 H196" stroke="#C8C8C8" stroke-width="1"/>
<text x="5" y="618" font-size="11.5" fill="#6D6D6D" font-weight="normal" text-anchor="start" textLength="38" lengthAdjust="spacingAndGlyphs">Toolbox</text>
<rect x="48" y="606" width="1" height="14" fill="#A0A0A0"/>
<text x="54.5" y="618" font-size="11.5" fill="#6D6D6D" font-weight="normal" text-anchor="start" textLength="33" lengthAdjust="spacingAndGlyphs">Search</text>
<text x="98.5" y="618" font-size="11.5" fill="#000" font-weight="normal" text-anchor="start" textLength="87.5" lengthAdjust="spacingAndGlyphs">Common Searches</text>
<rect x="0" y="629" width="196" height="20" fill="#C9C9C9"/>
<rect x="0" y="629" width="196" height="1" fill="#A9A9A9"/>
<text x="4.5" y="642.5" font-size="12" fill="#000" font-weight="normal" text-anchor="start" textLength="47" lengthAdjust="spacingAndGlyphs">Minimap</text>
<path d="M154.5,639 H161.5 L158,642.5Z" fill="#000"/><path d="M169.5,634.5 H174.5 M170.5,634.5 V640.5 M173.5,634.5 V640.5 M168.5,640.5 H175.5 M172,640.5 V644" stroke="#000" stroke-width="1.2" fill="none"/><path d="M183.5,636.5 L190.5,643.5 M190.5,636.5 L183.5,643.5" stroke="#000" stroke-width="2.2"/>
<rect x="0" y="649" width="196" height="189" fill="#ABABAB"/>
<rect x="195" y="629" width="1" height="209" fill="#A0A0A0"/>
<rect x="67.5" y="661.5" width="59" height="162.5" fill="#fff" stroke="#000" stroke-width="1.2"/><rect x="97" y="663.5" width="3" height="3" fill="#1A9A1A"/><rect x="97" y="820.5" width="3" height="3" fill="#E01010"/><path d="M120.6,710.4 L120.6,820.1" stroke="#9A9A9A" stroke-width="0.7" stroke-dasharray="1,1.2"/><path d="M107.6,752.1 L107.6,819.2" stroke="#9A9A9A" stroke-width="0.7" stroke-dasharray="1,1.2"/><path d="M92.1,820.1 L120.6,820.1" stroke="#9A9A9A" stroke-width="0.7" stroke-dasharray="1,1.2"/><path d="M97.9,710.4 L120.6,710.4" stroke="#9A9A9A" stroke-width="0.7" stroke-dasharray="1,1.2"/><path d="M87.2,752.1 L107.6,752.1" stroke="#9A9A9A" stroke-width="0.7" stroke-dasharray="1,1.2"/><path d="M78.5,771.0 L78.5,799.7" stroke="#9A9A9A" stroke-width="0.7" stroke-dasharray="1,1.2"/><path d="M78.5,771.0 L92.1,771.0" stroke="#9A9A9A" stroke-width="0.7" stroke-dasharray="1,1.2"/><path d="M78.5,799.7 L92.1,799.7" stroke="#9A9A9A" stroke-width="0.7" stroke-dasharray="1,1.2"/><path d="M91.1,688.0 L106.6,688.0" stroke="#9A9A9A" stroke-width="0.7" stroke-dasharray="1,1.2"/><path d="M106.6,688.0 L106.6,698.1" stroke="#9A9A9A" stroke-width="0.7" stroke-dasharray="1,1.2"/><path d="M91.1,698.1 L106.6,698.1" stroke="#9A9A9A" stroke-width="0.7" stroke-dasharray="1,1.2"/><path d="M85.3,735.6 L85.3,744.4" stroke="#9A9A9A" stroke-width="0.7" stroke-dasharray="1,1.2"/><path d="M85.3,744.4 L96.9,744.4" stroke="#9A9A9A" stroke-width="0.7" stroke-dasharray="1,1.2"/><path d="M96.9,791.0 L98.9,794.5" stroke="#9A9A9A" stroke-width="0.7" stroke-dasharray="1,1.2"/><path d="M88.2,725.9 L88.2,728.8" stroke="#9A9A9A" stroke-width="0.7" stroke-dasharray="1,1.2"/><path d="M97.9,666.7 V710.4" stroke="#B0B0B0" stroke-width="0.6"/><rect x="91.5" y="682.2" width="13.2" height="2" fill="#E4E4E4"/><rect x="91.5" y="694.4" width="12.2" height="2" fill="#E4E4E4"/><rect x="91.1" y="737.2" width="12.6" height="2" fill="#E4E4E4"/><rect x="85.3" y="777.4" width="13.6" height="2" fill="#E4E4E4"/><rect x="85.3" y="782.6" width="13.6" height="2" fill="#E4E4E4"/><rect x="80.4" y="802.0" width="13.0" height="2" fill="#E4E4E4"/><rect x="95.0" y="667.2" width="5.8" height="2" fill="#7A7A7A"/><rect x="93.0" y="671.1" width="8.7" height="2" fill="#7A7A7A"/><rect x="95.4" y="675.8" width="5.8" height="2" fill="#7A7A7A"/><rect x="93.0" y="679.8" width="10.1" height="2" fill="#7A7A7A"/><rect x="94.6" y="684.7" width="7.2" height="2" fill="#7A7A7A"/><rect x="93.0" y="688.6" width="9.3" height="2" fill="#7A7A7A"/><rect x="93.0" y="691.9" width="9.3" height="2" fill="#7A7A7A"/><rect x="95.4" y="699.7" width="5.4" height="2" fill="#7A7A7A"/><rect x="95.9" y="703.5" width="3.9" height="2" fill="#7A7A7A"/><rect x="94.6" y="706.8" width="6.6" height="2" fill="#7A7A7A"/><rect x="88.2" y="710.3" width="8.4" height="2" fill="#7A7A7A"/><rect x="90.1" y="713.3" width="4.9" height="2" fill="#7A7A7A"/><rect x="89.1" y="717.7" width="6.8" height="2" fill="#7A7A7A"/><rect x="88.2" y="722.0" width="7.8" height="2" fill="#7A7A7A"/><rect x="89.1" y="726.3" width="5.8" height="2" fill="#7A7A7A"/><rect x="87.2" y="730.7" width="9.7" height="2" fill="#7A7A7A"/><rect x="82.3" y="734.6" width="5.8" height="2" fill="#7A7A7A"/><rect x="92.1" y="734.6" width="8.7" height="2" fill="#7A7A7A"/><rect x="95.4" y="739.9" width="3.5" height="2" fill="#7A7A7A"/><rect x="89.1" y="745.3" width="6.8" height="2" fill="#7A7A7A"/><rect x="87.2" y="749.6" width="10.7" height="2" fill="#7A7A7A"/><rect x="79.4" y="753.1" width="13.6" height="2" fill="#7A7A7A"/><rect x="84.3" y="756.6" width="6.4" height="2" fill="#7A7A7A"/><rect x="84.3" y="760.5" width="5.8" height="2" fill="#7A7A7A"/><rect x="84.3" y="764.7" width="4.9" height="2" fill="#7A7A7A"/><rect x="80.4" y="768.2" width="13.0" height="2" fill="#7A7A7A"/><rect x="89.1" y="772.9" width="5.4" height="2" fill="#7A7A7A"/><rect x="88.2" y="776.0" width="6.8" height="2" fill="#7A7A7A"/><rect x="88.2" y="780.7" width="7.8" height="2" fill="#7A7A7A"/><rect x="75.2" y="781.6" width="6.2" height="2" fill="#7A7A7A"/><rect x="87.2" y="787.1" width="7.8" height="2" fill="#7A7A7A"/><rect x="87.2" y="790.0" width="5.8" height="2" fill="#7A7A7A"/><rect x="86.2" y="793.5" width="10.7" height="2" fill="#7A7A7A"/><rect x="81.0" y="802.0" width="12.0" height="2" fill="#7A7A7A"/><rect x="83.3" y="805.9" width="6.8" height="2" fill="#7A7A7A"/><rect x="84.3" y="809.8" width="5.8" height="2" fill="#7A7A7A"/><rect x="84.3" y="813.7" width="5.8" height="2" fill="#7A7A7A"/><rect x="116.3" y="759.5" width="6.8" height="2" fill="#7A7A7A"/><rect x="117.3" y="762.8" width="5.2" height="2" fill="#7A7A7A"/><rect x="117.3" y="766.7" width="5.2" height="2" fill="#7A7A7A"/><rect x="103.1" y="779.9" width="7.8" height="2" fill="#7A7A7A"/><rect x="104.3" y="783.8" width="6.6" height="2" fill="#7A7A7A"/><rect x="104.3" y="788.1" width="6.6" height="2" fill="#7A7A7A"/><rect x="68.5" y="759.5" width="58" height="50" fill="none" stroke="#0000F0" stroke-width="1.3"/>
<rect x="200.5" y="86.5" width="834" height="751" fill="#F0F0F0" stroke="#A0A0A0" stroke-width="1"/>
<defs><linearGradient id="tabg" x1="0" y1="0" x2="0" y2="1"><stop offset="0" stop-color="#FBFBFB"/><stop offset="1" stop-color="#E6E6E6"/></linearGradient></defs>
<path d="M207.5,108 L226,91 Q227,90.5 229,90.5 H304 Q306.5,90.5 306.5,93 V108" fill="url(#tabg)" stroke="#A8A8A8" stroke-width="1"/>
<path d="M306.5,108 V100 L316,91.5 Q317,90.5 319,90.5 H377 Q380.5,90.5 380.5,94 V100" fill="url(#tabg)" stroke="#A8A8A8" stroke-width="1"/>
<path d="M201,108.5 H373 L389,91.5 Q390,90.5 392,90.5 H565.5 Q568.5,90.5 568.5,93.5 V108.5 H1033" fill="#fff" stroke="#3D95E8" stroke-width="1.2"/>
<rect x="201" y="109" width="833" height="2" fill="#fff"/>
<text x="228" y="103.5" font-size="11.5" fill="#000" font-weight="normal" text-anchor="start" textLength="71.5" lengthAdjust="spacingAndGlyphs">Search Results</text>
<text x="319.5" y="103.5" font-size="11.5" fill="#000" font-weight="normal" text-anchor="start" textLength="53.5" lengthAdjust="spacingAndGlyphs">Workflow 1</text>
<text x="390.5" y="103.5" font-size="12" fill="#000" font-weight="bold" text-anchor="start" textLength="175" lengthAdjust="spacingAndGlyphs">Rental Invoice Approval - Tes...</text>
<path d="M976,96 H983.5 L979.75,100Z" fill="#000"/>
<path d="M996,93.5 L991,98.5 L996,103.5Z" fill="none" stroke="#000" stroke-width="1"/>
<path d="M1005.5,93.5 L1010.5,98.5 L1005.5,103.5Z" fill="none" stroke="#000" stroke-width="1"/>
<path d="M1018.5,95 L1025.5,102 M1025.5,95 L1018.5,102" stroke="#000" stroke-width="2.2"/>
<rect x="201" y="109.5" width="816" height="710" fill="#fff"/>
<g font-size="11">
<path d="M462.5,109 V109" stroke="#C0C0C0" stroke-width="1"/><path d="M459.3,107 L462.5,114 L465.7,107 L462.5,109Z" fill="#C0C0C0"/>
<rect x="421.5" y="133.5" width="15" height="8" fill="#DDE8F8" stroke="#2A4FA8" stroke-width="1"/><rect x="428" y="135" width="5" height="5" fill="#F8F060"/><text x="430.5" y="140" font-size="6" font-weight="bold" text-anchor="middle">?</text><path d="M423.5,139.5 H426" stroke="#2A4FA8"/>
<text x="440.5" y="136" font-size="11" fill="#000" font-weight="normal" text-anchor="start" textLength="56.5" lengthAdjust="spacingAndGlyphs">Retrieve GL</text>
<text x="440.5" y="149" font-size="11" fill="#000" font-weight="normal" text-anchor="start" textLength="22.38" lengthAdjust="spacingAndGlyphs">Data</text>
<path d="M462.5,159.5 V172" stroke="#C0C0C0" stroke-width="1"/><path d="M459.3,170 L462.5,177 L465.7,170 L462.5,172Z" fill="#C0C0C0"/>
<path d="M430.3,190.5 H434.7 V195.3 H439.5 V199.7 H434.7 V204.5 H430.3 V199.7 H425.5 V195.3 H430.3Z" fill="#8CE880" stroke="#1AA02A" stroke-width="1"/>
<text x="443.5" y="196.5" font-size="11" fill="#000" font-weight="normal" text-anchor="start" textLength="38.46" lengthAdjust="spacingAndGlyphs">GL Sum</text>
<text x="443.5" y="209" font-size="11" fill="#000" font-weight="normal" text-anchor="start" textLength="52.41" lengthAdjust="spacingAndGlyphs">Calculation</text>
<path d="M462.5,219 V232" stroke="#C0C0C0" stroke-width="1"/><path d="M459.3,230 L462.5,237 L465.7,230 L462.5,232Z" fill="#C0C0C0"/>
<rect x="363.5" y="249.0" width="8" height="8" rx="1" fill="url(#mbg)" stroke="#9AACC8" stroke-width="1"/><path d="M371.5,250.0 V257.0 H364.5" fill="none" stroke="#2A3A5A" stroke-width="1"/><path d="M365.3,253.0 H369.7" stroke="#1A2A4A" stroke-width="1.2"/>
<path d="M385.5,244.89999999999998 L393.3,252.7 L385.5,260.5 L377.7,252.7Z" fill="#F2D64A"/><path d="M385.5,246.1 L392.1,252.7 L385.5,259.3 L378.9,252.7Z" fill="#FFF8C8"/><path d="M385.5,247.1 L391.1,252.7 L385.5,258.3 L379.9,252.7Z" fill="#FFE62E"/><path d="M385.5,248.7 V256.2 M382.5,252.2 H388.5 M383.3,254.0 L385.5,256.5 L387.7,254.0" stroke="#000" stroke-width="1.2" fill="none"/>
<text x="397.3" y="257" font-size="11" fill="#000" font-weight="normal" text-anchor="start" textLength="163.7" lengthAdjust="spacingAndGlyphs">Does invoice total match GL Sum?</text>
<path d="M462.5,263 V275" stroke="#C0C0C0" stroke-width="1"/>
<path d="M336.5,275.5 H528.5" stroke="#C0C0C0" stroke-width="1" stroke-dasharray="3,2"/>
<path d="M462.5,270.0 L468.0,275.5 L462.5,281.0 L457.0,275.5Z" fill="#C4C4C4"/>
<path d="M528.5,276 V282.5" stroke="#C0C0C0" stroke-width="1" stroke-dasharray="4,2"/><path d="M525.3,280.5 L528.5,287.5 L531.7,280.5 L528.5,282.5Z" fill="#C0C0C0"/>
<rect x="504.5" y="298.5" width="8" height="8" rx="1" fill="url(#mbg)" stroke="#9AACC8" stroke-width="1"/><path d="M512.5,299.5 V306.5 H505.5" fill="none" stroke="#2A3A5A" stroke-width="1"/><path d="M506.3,302.5 H510.7" stroke="#1A2A4A" stroke-width="1.2"/>
<path d="M526.5,294.5 L534.3,302.3 L526.5,310.1 L518.7,302.3Z" fill="#F2D64A"/><path d="M526.5,295.7 L533.1,302.3 L526.5,308.90000000000003 L519.9,302.3Z" fill="#FFF8C8"/><path d="M526.5,296.7 L532.1,302.3 L526.5,307.90000000000003 L520.9,302.3Z" fill="#FFE62E"/><path d="M525.5,298.3 V303.8 H529.0 M527.5,301.8 L529.3,303.8 L527.5,305.3" stroke="#000" stroke-width="1.2" fill="none"/>
<text x="538.5" y="307" font-size="11" fill="#000" font-weight="normal" text-anchor="start" textLength="13.54" lengthAdjust="spacingAndGlyphs">No</text>
<path d="M528.5,313 V326.5" stroke="#C0C0C0" stroke-width="1"/><path d="M525.3,324.5 L528.5,331.5 L531.7,324.5 L528.5,326.5Z" fill="#C0C0C0"/>
<path d="M486,350 C485,347 486.5,344 490,344 C493.5,344 495,347 494,350 C493.5,352 492,354 491.8,357.5 H488.2 C488,354 486.5,352 486,350Z" fill="#A81212"/><circle cx="489" cy="347.5" r="1.5" fill="#C84040" opacity="0.6"/><rect x="482" y="358" width="16" height="2" fill="#A88410"/>
<text x="501" y="350" font-size="11" fill="#000" font-weight="normal" text-anchor="start" textLength="68.49" lengthAdjust="spacingAndGlyphs">Apply Warning</text>
<text x="501" y="363" font-size="11" fill="#000" font-weight="normal" text-anchor="start" textLength="30.62" lengthAdjust="spacingAndGlyphs">Stamp</text>
<text x="436.5" y="375.5" font-size="11" fill="#878787" font-weight="normal" text-anchor="start" textLength="184" lengthAdjust="spacingAndGlyphs">GL Totals Don't Match Invoice Amount</text>
<path d="M528.5,386 V398" stroke="#C0C0C0" stroke-width="1"/><path d="M525.3,396 L528.5,403 L531.7,396 L528.5,398Z" fill="#C0C0C0"/>
<defs><pattern id="hatch" width="2" height="2" patternUnits="userSpaceOnUse"><rect width="2" height="2" fill="#FAF0A0"/><rect width="1" height="1" fill="#F0D840"/><rect x="1" y="1" width="1" height="1" fill="#F0D840"/></pattern></defs>
<path d="M421,404 H637 V471.5 H421Z M426,409 V467 H632 V409Z" fill="url(#hatch)" fill-rule="evenodd"/>
<path d="M479.2,419.3 L481.5,421.6 L483.8,419.3 M481.5,418 V421.4" stroke="#1A3FC8" stroke-width="1.2" fill="none"/><path d="M474.5,421.5 H479 L480,423 H486.5 V432.5 H474.5Z" fill="#F2DA72" stroke="#C09A28" stroke-width="1"/><path d="M487,423.5 V432.8 H475" fill="none" stroke="#8A6A10" stroke-width="1"/><path d="M475,424.5 H486" stroke="#D8B848" stroke-width="1"/>
<text x="491.5" y="423" font-size="11" fill="#000" font-weight="normal" text-anchor="start" textLength="88.55" lengthAdjust="spacingAndGlyphs">Route Entry to "GL</text>
<text x="491.5" y="436" font-size="11" fill="#000" font-weight="normal" text-anchor="start" textLength="65.57" lengthAdjust="spacingAndGlyphs">Errors" Folder</text>
<text x="432" y="448.5" font-size="11" fill="#878787" font-weight="normal" text-anchor="start" textLength="158.38" lengthAdjust="spacingAndGlyphs">Routes Entry to Sub-Folder within</text>
<text x="432" y="461.5" font-size="11" fill="#878787" font-weight="normal" text-anchor="start" textLength="192" lengthAdjust="spacingAndGlyphs">Accounts Approval Folder for Corrections</text>
<path d="M528.5,471.5 V484.5" stroke="#C0C0C0" stroke-width="1"/><path d="M525.3,482.5 L528.5,489.5 L531.7,482.5 L528.5,484.5Z" fill="#C0C0C0"/>
<rect x="473.0" y="504.0" width="11" height="14" rx="1" fill="#E6F0FB" stroke="#2A4FA8" stroke-width="1"/><path d="M475.5,507.5 H481.5 M475.5,510.0 H481.5 M475.5,512.5 H481.5 M475.5,515.0 H481.5" stroke="#8AA4D0" stroke-width="1"/>
<text x="489.5" y="508.5" font-size="11" fill="#000" font-weight="normal" text-anchor="start" textLength="69.47" lengthAdjust="spacingAndGlyphs">Mark Accounts</text>
<text x="489.5" y="521.5" font-size="11" fill="#000" font-weight="normal" text-anchor="start" textLength="90.68" lengthAdjust="spacingAndGlyphs">Review as Pending</text>
<path d="M528.5,532 V544.5" stroke="#C0C0C0" stroke-width="1"/><path d="M525.3,542.5 L528.5,549.5 L531.7,542.5 L528.5,544.5Z" fill="#C0C0C0"/>
<rect x="493.5" y="562.0" width="8" height="8" rx="1" fill="url(#mbg)" stroke="#9AACC8" stroke-width="1"/><path d="M501.5,563.0 V570.0 H494.5" fill="none" stroke="#2A3A5A" stroke-width="1"/><path d="M495.3,566.0 H499.7" stroke="#1A2A4A" stroke-width="1.2"/>
<path d="M510.3,567.2 A6.3,6.3 0 1,0 516.6,560.9" fill="none" stroke="#E07010" stroke-width="2.8"/><path d="M517.6,557 L517.6,565 L512.8,561Z" fill="#E07010"/><rect x="509" y="559.8" width="3.2" height="3.2" fill="#F09030" transform="rotate(45 510.6 561.4)"/>
<text x="527.5" y="570" font-size="11" fill="#000" font-weight="normal" text-anchor="start" textLength="34.16" lengthAdjust="spacingAndGlyphs">Repeat</text>
<path d="M528.5,576.5 V589" stroke="#C0C0C0" stroke-width="1"/>
<path d="M528.5,583 V588.5" stroke="#C0C0C0" stroke-width="1"/><path d="M525.3,586.5 L528.5,593.5 L531.7,586.5 L528.5,588.5Z" fill="#C0C0C0"/>
<path d="M532.0,582.5 H621.5 V647.5 H528.5" fill="none" stroke="#C0C0C0" stroke-width="1" stroke-dasharray="3,2"/>
<path d="M529.5,582.5 L534.5,579.5 L534.5,585.5Z" fill="#C0C0C0"/>
<path d="M452,622 L465,608" stroke="#E8A020" stroke-width="3"/><path d="M463,607 L467,606 L466,610Z" fill="#E02020"/><path d="M451.5,622.5 L453,619.5 L454.5,621Z" fill="#333"/><circle cx="463.5" cy="618" r="3.8" fill="#fff" stroke="#4A6AA8" stroke-width="1"/><path d="M463.5,616 V618 H465" stroke="#333" stroke-width="0.6" fill="none"/>
<text x="471" y="613" font-size="11" fill="#000" font-weight="normal" text-anchor="start" textLength="130" lengthAdjust="spacingAndGlyphs">Wait until Accounts Review</text>
<text x="471" y="626" font-size="11" fill="#000" font-weight="normal" text-anchor="start" textLength="107.75" lengthAdjust="spacingAndGlyphs">is marked as Approved</text>
<path d="M528.5,636 V678" stroke="#C0C0C0" stroke-width="1"/>
<path d="M528.5,642.0 L534.0,647.5 L528.5,653.0 L523.0,647.5Z" fill="#C4C4C4"/>
<path d="M336.5,275.5 V677.5 H528.5" fill="none" stroke="#C0C0C0" stroke-width="1" stroke-dasharray="3,2"/>
<path d="M333.0,421 L336.5,427 L340.0,421 L336.5,423Z" fill="#C0C0C0"/>
<rect x="333.5" y="428" width="6" height="55" fill="#fff"/>
<rect x="293.5" y="443.5" width="8" height="8" rx="1" fill="url(#mbg)" stroke="#9AACC8" stroke-width="1"/><path d="M301.5,444.5 V451.5 H294.5" fill="none" stroke="#2A3A5A" stroke-width="1"/><path d="M295.3,447.5 H299.7" stroke="#1A2A4A" stroke-width="1.2"/>
<path d="M315.5,439.5 L323.3,447.3 L315.5,455.1 L307.7,447.3Z" fill="#F2D64A"/><path d="M315.5,440.7 L322.1,447.3 L315.5,453.90000000000003 L308.9,447.3Z" fill="#FFF8C8"/><path d="M315.5,441.7 L321.1,447.3 L315.5,452.90000000000003 L309.9,447.3Z" fill="#FFE62E"/><path d="M314.5,443.3 V448.8 H318.0 M316.5,446.8 L318.3,448.8 L316.5,450.3" stroke="#000" stroke-width="1.2" fill="none"/>
<text x="327" y="446" font-size="11" fill="#000" font-weight="normal" text-anchor="start" textLength="50.24" lengthAdjust="spacingAndGlyphs">Yes - Pass</text>
<text x="327" y="459" font-size="11" fill="#000" font-weight="normal" text-anchor="start" textLength="39.46" lengthAdjust="spacingAndGlyphs">Through</text>
<rect x="333.5" y="462" width="6" height="75" fill="#fff"/>
<path d="M336.5,463 V481" stroke="#C0C0C0" stroke-width="1"/>
<text x="336.5" y="491.5" font-size="11" fill="#878787" font-weight="normal" text-anchor="middle" textLength="22.96" lengthAdjust="spacingAndGlyphs">Drop</text>
<text x="336.5" y="504.5" font-size="11" fill="#878787" font-weight="normal" text-anchor="middle" textLength="41.79" lengthAdjust="spacingAndGlyphs">Activities</text>
<text x="336.5" y="517.5" font-size="11" fill="#878787" font-weight="normal" text-anchor="middle" textLength="22.96" lengthAdjust="spacingAndGlyphs">Here</text>
<path d="M336.5,520 V537" stroke="#C0C0C0" stroke-width="1"/>
<path d="M462.5,678 V698" stroke="#C0C0C0" stroke-width="1"/><path d="M459.3,696 L462.5,703 L465.7,696 L462.5,698Z" fill="#C0C0C0"/>
<path d="M412.5,710.5 H420 L423,713.5 V726.5 H412.5Z" fill="#8CBDF5" stroke="#3A7AD8" stroke-width="0.8"/><circle cx="417" cy="722" r="2" fill="#fff"/><rect x="419" y="716" width="8" height="10" fill="#1A9A2A"/><path d="M423,717.5 V723 M421,721 L423,723.5 L425,721" stroke="#fff" stroke-width="1" fill="none"/>
<text x="430.5" y="722.5" font-size="11" fill="#000" font-weight="normal" text-anchor="start" textLength="77.51" lengthAdjust="spacingAndGlyphs">Invoke Workflow</text>
<text x="371.5" y="737" font-size="11" fill="#878787" font-weight="normal" text-anchor="start" textLength="182.5" lengthAdjust="spacingAndGlyphs">Runs the Create CSV.Output Workflow</text>
<path d="M462.5,748.5 V761.5" stroke="#C0C0C0" stroke-width="1"/><path d="M459.3,759.5 L462.5,766.5 L465.7,759.5 L462.5,761.5Z" fill="#C0C0C0"/>
<path d="M417.2,781.3 L419.5,783.6 L421.8,781.3 M419.5,780 V783.4" stroke="#1A3FC8" stroke-width="1.2" fill="none"/><path d="M412.5,783.5 H417 L418,785 H424.5 V794.5 H412.5Z" fill="#F2DA72" stroke="#C09A28" stroke-width="1"/><path d="M425,785.5 V794.8 H413" fill="none" stroke="#8A6A10" stroke-width="1"/><path d="M413,786.5 H424" stroke="#D8B848" stroke-width="1"/>
<text x="429.5" y="784.5" font-size="11" fill="#000" font-weight="normal" text-anchor="start" textLength="36.52" lengthAdjust="spacingAndGlyphs">Send to</text>
<text x="429.5" y="797.5" font-size="11" fill="#000" font-weight="normal" text-anchor="start" textLength="83.02" lengthAdjust="spacingAndGlyphs">Processed Folder</text>
<path d="M462.5,808 V820" stroke="#C0C0C0" stroke-width="1"/>
<path d="M756.5,109 V387" stroke="#C0C0C0" stroke-width="1" stroke-dasharray="4,2"/>
<path d="M753.0,385 L756.5,391 L760.0,385 L756.5,387Z" fill="#C0C0C0"/>
<rect x="701.5" y="408.5" width="8" height="8" rx="1" fill="url(#mbg)" stroke="#9AACC8" stroke-width="1"/><path d="M709.5,409.5 V416.5 H702.5" fill="none" stroke="#2A3A5A" stroke-width="1"/><path d="M703.3,412.5 H707.7" stroke="#1A2A4A" stroke-width="1.2"/>
<path d="M723.5,404.7 L731.3,412.5 L723.5,420.3 L715.7,412.5Z" fill="#F2D64A"/><path d="M723.5,405.9 L730.1,412.5 L723.5,419.1 L716.9,412.5Z" fill="#FFF8C8"/><path d="M723.5,406.9 L729.1,412.5 L723.5,418.1 L717.9,412.5Z" fill="#FFE62E"/><path d="M722.5,408.5 V414.0 H726.0 M724.5,412.0 L726.3,414.0 L724.5,415.5" stroke="#000" stroke-width="1.2" fill="none"/>
<text x="735.5" y="411" font-size="11" fill="#000" font-weight="normal" text-anchor="start" textLength="73.6" lengthAdjust="spacingAndGlyphs">Denied - Rental</text>
<text x="735.5" y="424" font-size="11" fill="#000" font-weight="normal" text-anchor="start" textLength="43.57" lengthAdjust="spacingAndGlyphs">Accounts</text>
<path d="M756.5,428 V441" stroke="#C0C0C0" stroke-width="1"/><path d="M753.3,439 L756.5,446 L759.7,439 L756.5,441Z" fill="#C0C0C0"/>
<rect x="709.5" y="460" width="5" height="6" rx="1.5" fill="#F0B040" stroke="#B07010" stroke-width="0.6"/><ellipse cx="712" cy="469" rx="4" ry="2.5" fill="#3AAA3A"/><path d="M714.5,466.5 H718 L719,467.5 H723.5 V474.5 H714.5Z" fill="#F5DC70" stroke="#B8962A" stroke-width="0.8"/><path d="M719.5,460.5 V464 M718,462.5 L719.5,464 L721,462.5" stroke="#1A3FC8" stroke-width="1" fill="none"/>
<text x="728.5" y="465" font-size="11" fill="#000" font-weight="normal" text-anchor="start" textLength="68.3" lengthAdjust="spacingAndGlyphs">Return Invoice</text>
<text x="728.5" y="478" font-size="11" fill="#000" font-weight="normal" text-anchor="start" textLength="38.88" lengthAdjust="spacingAndGlyphs">to Agent</text>
<path d="M756.5,488 V501.5" stroke="#C0C0C0" stroke-width="1"/><path d="M753.3,499.5 L756.5,506.5 L759.7,499.5 L756.5,501.5Z" fill="#C0C0C0"/>
<path d="M710.5,520.0 H718 L721,523.0 V535.0 H710.5Z" fill="#8CBDF5" stroke="#4A8AE0" stroke-width="0.8"/><circle cx="717.5" cy="531.5" r="1.6" fill="#2D7BE0"/><circle cx="716" cy="527.5" r="1.5" fill="#fff"/><circle cx="710" cy="531.5" r="3.8" fill="#C81818"/>
<text x="725.5" y="525.5" font-size="11" fill="#000" font-weight="normal" text-anchor="start" textLength="75.96" lengthAdjust="spacingAndGlyphs">End - Denied by</text>
<text x="725.5" y="538" font-size="11" fill="#000" font-weight="normal" text-anchor="start" textLength="43.57" lengthAdjust="spacingAndGlyphs">Accounts</text>
<path d="M756.5,547 V820" stroke="#C0C0C0" stroke-width="1" stroke-dasharray="4,2"/>
<rect x="880.5" y="118.0" width="8" height="8" rx="1" fill="url(#mbg)" stroke="#9AACC8" stroke-width="1"/><path d="M888.5,119.0 V126.0 H881.5" fill="none" stroke="#2A3A5A" stroke-width="1"/><path d="M882.3,122.0 H886.7" stroke="#1A2A4A" stroke-width="1.2"/>
<path d="M902.5,113.7 L910.3,121.5 L902.5,129.3 L894.7,121.5Z" fill="#F2D64A"/><path d="M902.5,114.9 L909.1,121.5 L902.5,128.1 L895.9,121.5Z" fill="#FFF8C8"/><path d="M902.5,115.9 L908.1,121.5 L902.5,127.1 L896.9,121.5Z" fill="#FFE62E"/><path d="M901.5,117.5 V123.0 H905.0 M903.5,121.0 L905.3,123.0 L903.5,124.5" stroke="#000" stroke-width="1.2" fill="none"/>
<text x="914.5" y="126" font-size="11" fill="#000" font-weight="normal" text-anchor="start" textLength="77.74" lengthAdjust="spacingAndGlyphs">Denied by Agent</text>
<path d="M936.5,132.5 V145" stroke="#C0C0C0" stroke-width="1"/><path d="M933.3,143 L936.5,150 L939.7,143 L936.5,145Z" fill="#C0C0C0"/>
<path d="M898.7,165.8 L901.0,168.1 L903.3,165.8 M901.0,164.5 V167.9" stroke="#1A3FC8" stroke-width="1.2" fill="none"/><path d="M894.0,168.0 H898.5 L899.5,169.5 H906.0 V179.0 H894.0Z" fill="#F2DA72" stroke="#C09A28" stroke-width="1"/><path d="M906.5,170.0 V179.3 H894.5" fill="none" stroke="#8A6A10" stroke-width="1"/><path d="M894.5,171.0 H905.5" stroke="#D8B848" stroke-width="1"/>
<text x="911.5" y="169" font-size="11" fill="#000" font-weight="normal" text-anchor="start" textLength="43.57" lengthAdjust="spacingAndGlyphs">Moved to</text>
<text x="911.5" y="182" font-size="11" fill="#000" font-weight="normal" text-anchor="start" textLength="66.54" lengthAdjust="spacingAndGlyphs">Denied Folder</text>
<path d="M936.5,192 V205.5" stroke="#C0C0C0" stroke-width="1"/><path d="M933.3,203.5 L936.5,210.5 L939.7,203.5 L936.5,205.5Z" fill="#C0C0C0"/>
<path d="M895.5,223.5 H903 L906,226.5 V238.5 H895.5Z" fill="#8CBDF5" stroke="#4A8AE0" stroke-width="0.8"/><circle cx="902.5" cy="235" r="1.6" fill="#2D7BE0"/><circle cx="901" cy="231" r="1.5" fill="#fff"/><circle cx="895" cy="235" r="3.8" fill="#C81818"/>
<text x="910.5" y="229" font-size="11" fill="#000" font-weight="normal" text-anchor="start" textLength="64.77" lengthAdjust="spacingAndGlyphs" style="white-space:pre">End  - Invoice</text>
<text x="910.5" y="241.5" font-size="11" fill="#000" font-weight="normal" text-anchor="start" textLength="33.57" lengthAdjust="spacingAndGlyphs">Denied</text>
<path d="M936.5,252 V820" stroke="#C0C0C0" stroke-width="1" stroke-dasharray="4,2"/>
</g>
<rect x="1016.5" y="109.5" width="16" height="709" fill="#fff" stroke="#C8C8C8" stroke-width="1"/>
<rect x="1016.5" y="109.5" width="16" height="16" fill="#fff" stroke="#C8C8C8" stroke-width="1"/>
<path d="M1020.5,119.5 L1024.5,115.5 L1028.5,119.5" fill="none" stroke="#606060" stroke-width="1.2"/>
<rect x="1016.5" y="531.5" width="16" height="201" fill="#DCDCDC" stroke="#A8A8A8" stroke-width="1"/>
<path d="M1021.5,628.5 H1027.5 M1021.5,631.5 H1027.5 M1021.5,634.5 H1027.5" stroke="#606060" stroke-width="1"/>
<rect x="1016.5" y="802.5" width="16" height="16" fill="#fff" stroke="#C8C8C8" stroke-width="1"/>
<path d="M1020.5,808.5 L1024.5,812.5 L1028.5,808.5" fill="none" stroke="#606060" stroke-width="1.2"/>
<rect x="202.5" y="819.5" width="813" height="16" fill="#fff" stroke="#C8C8C8" stroke-width="1"/>
<rect x="202.5" y="819.5" width="16" height="16" fill="#fff" stroke="#C8C8C8" stroke-width="1"/>
<path d="M212.5,823.5 L208.5,827.5 L212.5,831.5" fill="none" stroke="#606060" stroke-width="1.2"/>
<rect x="241.5" y="819.5" width="717" height="16" fill="#DCDCDC" stroke="#A8A8A8" stroke-width="1"/>
<path d="M597.5,824 V830.5 M600.5,824 V830.5 M603.5,824 V830.5" stroke="#606060" stroke-width="1"/>
<rect x="999.5" y="819.5" width="16" height="16" fill="#fff" stroke="#C8C8C8" stroke-width="1"/>
<path d="M1005.5,823.5 L1009.5,827.5 L1005.5,831.5" fill="none" stroke="#606060" stroke-width="1.2"/>
<rect x="1016" y="819" width="17" height="17" fill="#F0F0F0"/>
<defs><linearGradient id="phdr" x1="0" y1="0" x2="0" y2="1"><stop offset="0" stop-color="#C3D4EA"/><stop offset="1" stop-color="#A6BEDC"/></linearGradient><linearGradient id="pband" x1="0" y1="0" x2="0" y2="1"><stop offset="0" stop-color="#1E55B8"/><stop offset="0.5" stop-color="#2E65C4"/><stop offset="1" stop-color="#6A97D8"/></linearGradient><linearGradient id="ptitle" x1="0" y1="0" x2="0" y2="1"><stop offset="0" stop-color="#D6E4F8"/><stop offset="0.45" stop-color="#90B2E6"/><stop offset="1" stop-color="#3D70C8"/></linearGradient><linearGradient id="ptitleL" x1="0" y1="0" x2="1" y2="0"><stop offset="0" stop-color="#2A5EC0" stop-opacity="0.55"/><stop offset="0.6" stop-color="#2A5EC0" stop-opacity="0.25"/><stop offset="1" stop-color="#2A5EC0" stop-opacity="0"/></linearGradient><linearGradient id="ghdr" x1="0" y1="0" x2="1" y2="0"><stop offset="0" stop-color="#DBE9FC"/><stop offset="0.45" stop-color="#A9C4F0"/><stop offset="1" stop-color="#6A93E0"/></linearGradient></defs>
<rect x="1039" y="86" width="401" height="752" fill="#DBE9FC"/>
<rect x="1039" y="86" width="401" height="20" fill="url(#phdr)"/>
<rect x="1039" y="86" width="401" height="1" fill="#A9A9A9"/>
<rect x="1039" y="86" width="1" height="20" fill="#A0A0A0"/><rect x="1039" y="143" width="1" height="695" fill="#C8D4E4"/>
<text x="1043.5" y="99.8" font-size="12" fill="#000" font-weight="normal" text-anchor="start" textLength="53" lengthAdjust="spacingAndGlyphs">Properties</text>
<path d="M1399.0,96 H1406.0 L1402.5,99.5Z" fill="#000"/><path d="M1413.5,91.5 H1418.5 M1414.5,91.5 V97.5 M1417.5,91.5 V97.5 M1412.5,97.5 H1419.5 M1416,97.5 V101" stroke="#000" stroke-width="1.2" fill="none"/><path d="M1427.5,93.5 L1434.5,100.5 M1434.5,93.5 L1427.5,100.5" stroke="#000" stroke-width="2.2"/>
<rect x="1039" y="106" width="400" height="37" fill="url(#pband)"/>
<rect x="1045" y="112.5" width="388.5" height="25.5" fill="url(#ptitle)" stroke="#000" stroke-width="1.6"/>
<rect x="1046" y="113.5" width="250" height="23.5" fill="url(#ptitleL)"/>
<text x="1054.3" y="130" font-size="12.8" fill="#fff" font-weight="bold" text-anchor="start" textLength="205" lengthAdjust="spacingAndGlyphs">Route Entry to "GL Errors" Folder</text>
<rect x="1054.3" y="132" width="205" height="1.2" fill="#fff"/>
<circle cx="1420" cy="125" r="8" fill="#2A8ED0"/><text x="1420" y="130" font-size="13" font-weight="bold" fill="#fff" text-anchor="middle">?</text>
<rect x="1045.5" y="149.5" width="371" height="25" fill="url(#ghdr)" stroke="#1F4FC0" stroke-width="1"/><text x="1051.5" y="166.7" font-size="12.7" fill="#6347BE" font-weight="bold" text-anchor="start">Activity Name</text>
<rect x="1045.5" y="174.5" width="371" height="33" fill="none" stroke="#1F4FC0" stroke-width="1"/>
<rect x="1052.5" y="181.5" width="357" height="19" fill="#fff" stroke="#7A7A7A" stroke-width="1"/>
<text x="1055.5" y="194.5" font-size="11" fill="#000" font-weight="normal" text-anchor="start" textLength="156.5" lengthAdjust="spacingAndGlyphs">Route Entry to "GL Errors" Folder</text>
<rect x="1045.5" y="214.5" width="371" height="25.5" fill="url(#ghdr)" stroke="#1F4FC0" stroke-width="1"/><text x="1051.5" y="232.2" font-size="12.7" fill="#6347BE" font-weight="bold" text-anchor="start">Activity Description</text>
<rect x="1045.5" y="239.5" width="371" height="70.5" fill="none" stroke="#1F4FC0" stroke-width="1"/>
<rect x="1052.5" y="246.5" width="357" height="57" fill="#fff" stroke="#7A7A7A" stroke-width="1"/>
<text x="1055.5" y="259.5" font-size="11" fill="#000" font-weight="normal" text-anchor="start" textLength="297" lengthAdjust="spacingAndGlyphs">Routes Entry to Sub-Folder within Accounts Approval Folder for</text>
<text x="1055" y="272.5" font-size="11" fill="#000" font-weight="normal" text-anchor="start" textLength="53" lengthAdjust="spacingAndGlyphs">Corrections</text>
<rect x="1391.5" y="248.5" width="16" height="53" fill="#fff" stroke="#C8C8C8" stroke-width="1"/>
<rect x="1391.5" y="248.5" width="16" height="16" fill="#fff" stroke="#C8C8C8" stroke-width="1"/>
<rect x="1391.5" y="285.5" width="16" height="16" fill="#fff" stroke="#C8C8C8" stroke-width="1"/>
<path d="M1395.5,259.0 L1399.5,255.0 L1403.5,259.0" fill="none" stroke="#707070" stroke-width="1.2"/>
<path d="M1395.5,291.0 L1399.5,295.0 L1403.5,291.0" fill="none" stroke="#707070" stroke-width="1.2"/>
<rect x="1045.5" y="318.0" width="371" height="25.0" fill="#6A93E0" stroke="#1F4FC0" stroke-width="1"/><text x="1051.5" y="335.2" font-size="12.7" fill="#fff" font-weight="bold" text-anchor="start">Connection Profile</text>
<rect x="1045.5" y="342.5" width="371" height="50" fill="none" stroke="#1F4FC0" stroke-width="1"/>
<rect x="1052.5" y="349.5" width="357" height="20" fill="#fff" stroke="#7A7A7A" stroke-width="1"/>
<text x="1056.5" y="363.5" font-size="11" fill="#000" font-weight="normal" text-anchor="start" textLength="110" lengthAdjust="spacingAndGlyphs">Peka: workflow@PEKA</text>
<path d="M1396,357.5 L1400,361.5 L1404,357.5" fill="none" stroke="#333" stroke-width="1.5"/>
<text x="1055.5" y="383.5" font-size="11" fill="#0000FF" font-weight="normal" text-anchor="start" textLength="109" lengthAdjust="spacingAndGlyphs">Manage Connections...</text>
<rect x="1055.5" y="385" width="109" height="1" fill="#0000FF"/>
<rect x="1045.5" y="400.0" width="371" height="25.0" fill="url(#ghdr)" stroke="#1F4FC0" stroke-width="1"/><text x="1051.5" y="417.2" font-size="12.7" fill="#6347BE" font-weight="bold" text-anchor="start">Routing Options</text>
<rect x="1045.5" y="424.5" width="371" height="420" fill="none" stroke="#1F4FC0" stroke-width="1"/>
<text x="1055.5" y="442" font-size="11" fill="#000" font-weight="bold" text-anchor="start" textLength="54" lengthAdjust="spacingAndGlyphs">Required:</text>
<path d="M1069.5,454.5 H1077 L1079.5,457.5 H1095.5 V477.5 H1069.5Z" fill="#F3DC86" stroke="#C8A850" stroke-width="1"/><path d="M1069.5,459.5 H1095.5" stroke="#E8C868" stroke-width="1"/><rect x="1070" y="460" width="25" height="17" fill="#F8E8A0"/>
<text x="1105.5" y="462.5" font-size="11" fill="#000" font-weight="normal" text-anchor="start" textLength="87" lengthAdjust="spacingAndGlyphs">Move the entry to:</text>
<text x="1105.5" y="478" font-size="11" fill="#000" font-weight="normal" text-anchor="start" textLength="219" lengthAdjust="spacingAndGlyphs">\Invoice Review\Rental AP\GL Amount Errors</text>
<text x="1055" y="498.5" font-size="11" fill="#000" font-weight="bold" text-anchor="start" textLength="51" lengthAdjust="spacingAndGlyphs">Optional:</text>
<defs><linearGradient id="fldg" x1="0" y1="0" x2="0" y2="1"><stop offset="0" stop-color="#FFF0A0"/><stop offset="1" stop-color="#EAC84A"/></linearGradient><linearGradient id="orng" x1="0" y1="0" x2="1" y2="1"><stop offset="0" stop-color="#F8A040"/><stop offset="1" stop-color="#D83A10"/></linearGradient></defs>
<rect x="1081.5" y="507.5" width="15" height="17.5" fill="#fff" stroke="#2A5AC8" stroke-width="1"/><path d="M1096.5,508 V525" stroke="#0A3AA8" stroke-width="1.5"/>
<rect x="1079" y="509.5" width="15.5" height="18.5" fill="#fff" stroke="#3A6AD8" stroke-width="1"/><path d="M1094.5,510 V528" stroke="#0A3AA8" stroke-width="1.4"/>
<path d="M1078.5,511.5 H1089.5 L1093,515 V530.5 H1078.5Z" fill="#F4F8FF" stroke="#6A9AE8" stroke-width="1"/><path d="M1093,515 V530.5" stroke="#0A3AA8" stroke-width="1.4"/>
<path d="M1069.5,519.5 H1076 L1077.5,521 H1086 V523 H1069.5Z" fill="#F2D870" stroke="#C8A030" stroke-width="0.8"/>
<path d="M1069.5,522.5 H1088.5 V537.5 H1070.5Z" fill="url(#fldg)" stroke="#C8A030" stroke-width="0.9"/>
<path d="M1082,508.5 C1077,507.5 1072.5,510.5 1071.5,515.5" fill="none" stroke="url(#orng)" stroke-width="2.6"/><path d="M1067,514.5 L1069.5,520.5 L1075,515.5Z" fill="#E04818"/>
<path d="M1082,535.5 C1088,537 1093,533 1095,528" fill="none" stroke="url(#orng)" stroke-width="2.6"/><path d="M1092,529 L1096.5,523.5 L1098.5,530.5Z" fill="#E04818"/>
<text x="1105.5" y="527" font-size="11" fill="#000" font-weight="normal" text-anchor="start" textLength="71" lengthAdjust="spacingAndGlyphs">Move the entry</text>
<rect x="1071.5" y="546.5" width="23" height="29" rx="2" fill="url(#docg)" stroke="#4A6AB0" stroke-width="1"/>
<defs><linearGradient id="docg" x1="0" y1="0" x2="0" y2="1"><stop offset="0" stop-color="#fff"/><stop offset="1" stop-color="#C8DCF4"/></linearGradient></defs>
<path d="M1094.5,549 V573 Q1094.5,575.5 1092,575.5 H1074" fill="none" stroke="#1A3A7A" stroke-width="1.2"/>
<rect x="1076" y="551.4" width="13.5" height="2.4" fill="#fff" stroke="#4A6A9A" stroke-width="0.7"/>
<rect x="1076" y="556.9" width="13.5" height="2.4" fill="#fff" stroke="#4A6A9A" stroke-width="0.7"/>
<rect x="1076" y="562.4" width="13.5" height="2.4" fill="#fff" stroke="#4A6A9A" stroke-width="0.7"/>
<rect x="1076" y="567.3" width="13.5" height="2.4" fill="#fff" stroke="#4A6A9A" stroke-width="0.7"/>
<text x="1105.5" y="565" font-size="11" fill="#000" font-weight="normal" text-anchor="start" textLength="148" lengthAdjust="spacingAndGlyphs">No fields or templates assigned.</text>
<path d="M1083,583 L1095,592 V615 H1071 V592Z" fill="#2850C0" stroke="#1A3A9A" stroke-width="0.6"/><circle cx="1083" cy="589" r="2" fill="#fff"/><path d="M1078,596 H1086 V611 H1078Z M1081,599 H1085 M1081,603 H1085 M1081,607 H1085" fill="none" stroke="#5A7AD8" stroke-width="1"/>
<text x="1105.5" y="603" font-size="11" fill="#000" font-weight="normal" text-anchor="start" textLength="146" lengthAdjust="spacingAndGlyphs">No tags are added or removed.</text>
<rect x="1067.5" y="625.5" width="31" height="23" fill="url(#mailg)" stroke="#888" stroke-width="1"/>
<defs><linearGradient id="mailg" x1="0" y1="0" x2="1" y2="1"><stop offset="0" stop-color="#fff"/><stop offset="1" stop-color="#E0E0E0"/></linearGradient></defs>
<path d="M1070,629.5 H1076 M1070,632 H1077 M1070,634.5 H1075 M1075,638.5 H1082 M1075,641 H1084 M1075,643.5 H1085" stroke="#444" stroke-width="0.6"/>
<ellipse cx="1087" cy="631.5" rx="2.8" ry="2.3" fill="none" stroke="#F05050" stroke-width="1.2"/><path d="M1089,629.5 H1096 M1089,632.5 H1096" stroke="#F05050" stroke-width="1.1"/>
<text x="1105.5" y="641" font-size="11" fill="#000" font-weight="normal" text-anchor="start" textLength="103" lengthAdjust="spacingAndGlyphs">No e-mails configured.</text>
<text x="1055.5" y="669.5" font-size="11.5" fill="#000" font-weight="bold" text-anchor="start" textLength="93" lengthAdjust="spacingAndGlyphs">Wait Conditions:</text>
<rect x="1055.5" y="675.5" width="351" height="170" fill="#DBE9FC" stroke="#7A7A7A" stroke-width="1.4"/>
<path d="M1406.5,676 V838" stroke="#F4F8FC" stroke-width="1.2"/>
<text x="1230.5" y="780" font-size="11" fill="#000" font-weight="normal" text-anchor="middle" textLength="107" lengthAdjust="spacingAndGlyphs">No wait conditions set.</text>
<rect x="1423.5" y="143.5" width="15.5" height="694" fill="#fff" stroke="#C8C8C8" stroke-width="1"/>
<rect x="1423.5" y="143.5" width="15.5" height="16" fill="#fff" stroke="#C8C8C8" stroke-width="1"/>
<path d="M1427.3,153.5 L1431.3,149.5 L1435.3,153.5" fill="none" stroke="#606060" stroke-width="1.2"/>
<rect x="1423.5" y="159.5" width="15.5" height="532" fill="#DADADA" stroke="#C0C0C0" stroke-width="1"/>
<path d="M1428.5,423.5 H1434.5 M1428.5,426.5 H1434.5 M1428.5,429.5 H1434.5" stroke="#606060" stroke-width="1"/>
<rect x="1423.5" y="821.5" width="15.5" height="16" fill="#fff" stroke="#C8C8C8" stroke-width="1"/>
<path d="M1427.3,827.5 L1431.3,831.5 L1435.3,827.5" fill="none" stroke="#606060" stroke-width="1.2"/>
<rect x="0" y="838" width="1440" height="22" fill="#F0F0F0"/>
<text x="4" y="854" font-size="12" fill="#000" font-weight="normal" text-anchor="start">Ready</text>
<text x="1422" y="854" font-size="12" fill="#000" font-weight="normal" text-anchor="end" textLength="140" lengthAdjust="spacingAndGlyphs">Workflow Server: localhost</text>
<rect x="0" y="860" width="1440" height="40" fill="#68C8EA"/>
<rect x="0" y="859.5" width="1440" height="1.5" fill="#3A4C55"/>
<rect x="1438.5" y="860" width="1.5" height="40" fill="#3A4C55"/>
<rect x="0" y="899" width="1440" height="1" fill="#3A4C55"/>
<path d="M11.8,870.2 L23,868.9 L23,879 L11.8,879Z M24,868.7 L38.2,866.8 L38.2,879 L24,879Z M11.8,880 L23,880 L23,890 L11.8,888.6Z M24,880 L38.2,880 L38.2,892.2 L24,890.2Z" fill="#fff" stroke="#4AA8C8" stroke-width="0.5"/>
<rect x="0" y="860" width="1" height="40" fill="#3A4C55"/>
<rect x="51.5" y="860.5" width="59.5" height="39" fill="#7BD2EF" stroke="#2D4654" stroke-width="1"/>
<rect x="65.5" y="864.5" width="15" height="8" fill="#228BD9" stroke="#fff" stroke-width="1.2"/>
<rect x="65.5" y="873" width="15" height="19" fill="#228BD9" stroke="#fff" stroke-width="1.2"/>
<rect x="80" y="880" width="7" height="4" rx="1.5" fill="#7593A8" stroke="#fff" stroke-width="1"/>
<rect x="70.8" y="882.5" width="25.5" height="13" rx="1.5" fill="#7593A8" stroke="#fff" stroke-width="1.2"/>
<path d="M73.5,886.6 H93.5" stroke="#fff" stroke-width="1"/><circle cx="76" cy="886.6" r="1.3" fill="#fff"/><circle cx="91" cy="886.6" r="1.3" fill="#fff"/>
<defs><linearGradient id="psg" x1="0" y1="0" x2="0" y2="1"><stop offset="0" stop-color="#5AAEE0"/><stop offset="0.5" stop-color="#1F6FB8"/><stop offset="1" stop-color="#2B5FAF"/></linearGradient></defs>
<path d="M135,869.5 L156.2,869.5 L151.5,890.5 L130.5,890.5Z" fill="url(#psg)" stroke="#1C4F86" stroke-width="0.8"/>
<path d="M139.5,873 L146.5,879.5 L137.5,886" fill="none" stroke="#fff" stroke-width="1.6"/><path d="M141,886.5 H148" stroke="#fff" stroke-width="1.3"/>
<path d="M190,870 L200,870 L202,872 L220,872 L220,895 L190,895Z" fill="#F2D77E" stroke="#C9A24A" stroke-width="0.8"/>
<rect x="192" y="868" width="10" height="4" fill="#fff" stroke="#C9A24A" stroke-width="0.5"/><rect x="193" y="868.5" width="2.5" height="2" fill="#1DAA3A"/>
<rect x="201" y="870" width="10" height="4" fill="#fff" stroke="#C9A24A" stroke-width="0.5"/><rect x="202" y="870.5" width="2.5" height="2" fill="#D83A2A"/>
<rect x="208" y="871.5" width="11" height="4" fill="#fff" stroke="#C9A24A" stroke-width="0.5"/><rect x="209.5" y="872.5" width="2.5" height="2" fill="#2A8AD8"/>
<path d="M190,876 L220,876 L220,895 L190,895Z" fill="#F6E3A0" stroke="#C9A24A" stroke-width="0.8"/>
<path d="M193,895 L193,884 L217,884 L217,895 L211,895 L211,889 L199,889 L199,895Z" fill="#9BD0EE" stroke="#5E9CC8" stroke-width="0.8"/>
<rect x="252.5" y="864.5" width="7" height="10.5" rx="3" fill="#D9A52E" stroke="#9B6E12" stroke-width="0.6"/><ellipse cx="256" cy="865.5" rx="3.5" ry="1.5" fill="#F7E08A"/>
<path d="M266,865.5 H276.5 V876 M252.5,879.5 V889 H263" fill="none" stroke="#3F7D16" stroke-width="1.5" stroke-dasharray="1.5,1.5"/>
<path d="M264,894 L278,881" stroke="#C99A2E" stroke-width="2"/><path d="M266,880 L279,894" stroke="#ddd" stroke-width="2.2"/>
<path d="M273,878 L282,882 L280,886 L272,882Z" fill="#ccc" stroke="#777" stroke-width="0.6"/><path d="M263,878 a4,4 0 1,0 5,4" fill="none" stroke="#ccc" stroke-width="2"/>
<rect x="299.5" y="860.5" width="59" height="39" fill="#9DDCF2" stroke="#2D4654" stroke-width="1"/>
<path d="M343.99,877.50 L343.99,882.50 L340.20,882.60 L338.76,886.09 L341.37,888.84 L337.84,892.37 L335.09,889.76 L331.60,891.20 L331.50,894.99 L326.50,894.99 L326.40,891.20 L322.91,889.76 L320.16,892.37 L316.63,888.84 L319.24,886.09 L317.80,882.60 L314.01,882.50 L314.01,877.50 L317.80,877.40 L319.24,873.91 L316.63,871.16 L320.16,867.63 L322.91,870.24 L326.40,868.80 L326.50,865.01 L331.50,865.01 L331.60,868.80 L335.09,870.24 L337.84,867.63 L341.37,871.16 L338.76,873.91 L340.20,877.40Z" fill="#0A4A8A"/>
<circle cx="329" cy="880" r="10.5" fill="#0A4A8A"/><circle cx="329" cy="880" r="8.7" fill="#0F6CB6"/><circle cx="329" cy="880" r="7.6" fill="#fff"/><circle cx="329" cy="880" r="5.3" fill="#E0621C"/><circle cx="329" cy="880" r="3.2" fill="#fff"/>
<path d="M1269.5,883 L1273.5,877.5 L1277.5,883Z" fill="#000"/>
<path d="M1291,872 V887" stroke="#fff" stroke-width="1.6"/><path d="M1292,873 C1296,871 1298,875 1305,873 L1305,880 C1299,882 1296,878 1292,880Z" fill="#fff" stroke="#666" stroke-width="0.4"/>
<rect x="1315" y="872.5" width="4" height="7" rx="1" fill="none" stroke="#fff" stroke-width="1.3"/><path d="M1317,879.5 V886" stroke="#fff" stroke-width="1.3"/>
<rect x="1320.5" y="874" width="9" height="8" fill="none" stroke="#fff" stroke-width="1.3"/><path d="M1325,882 V884.5 M1321.5,885 H1328.5" stroke="#fff" stroke-width="1.3"/>
<path d="M1338.5,877 H1341.5 L1346.5,872.5 V887 L1341.5,883 H1338.5Z" fill="#fff" stroke="#888" stroke-width="0.4"/>
<circle cx="1301.5" cy="884" r="4.2" fill="#E03A3A" stroke="#fff" stroke-width="0.8"/><path d="M1299.7,882.2 L1303.3,885.8 M1303.3,882.2 L1299.7,885.8" stroke="#fff" stroke-width="1.2"/>
<circle cx="1349.5" cy="884" r="4.2" fill="#E03A3A" stroke="#fff" stroke-width="0.8"/><path d="M1347.7,882.2 L1351.3,885.8 M1351.3,882.2 L1347.7,885.8" stroke="#fff" stroke-width="1.2"/>
<text x="1396" y="876" font-size="12" fill="#000" font-weight="normal" text-anchor="middle" textLength="43" lengthAdjust="spacingAndGlyphs">8:12 AM</text>
<text x="1397" y="892.5" font-size="12" fill="#000" font-weight="normal" text-anchor="middle" textLength="51.5" lengthAdjust="spacingAndGlyphs">3/28/2017</text>
</svg></body></html>
